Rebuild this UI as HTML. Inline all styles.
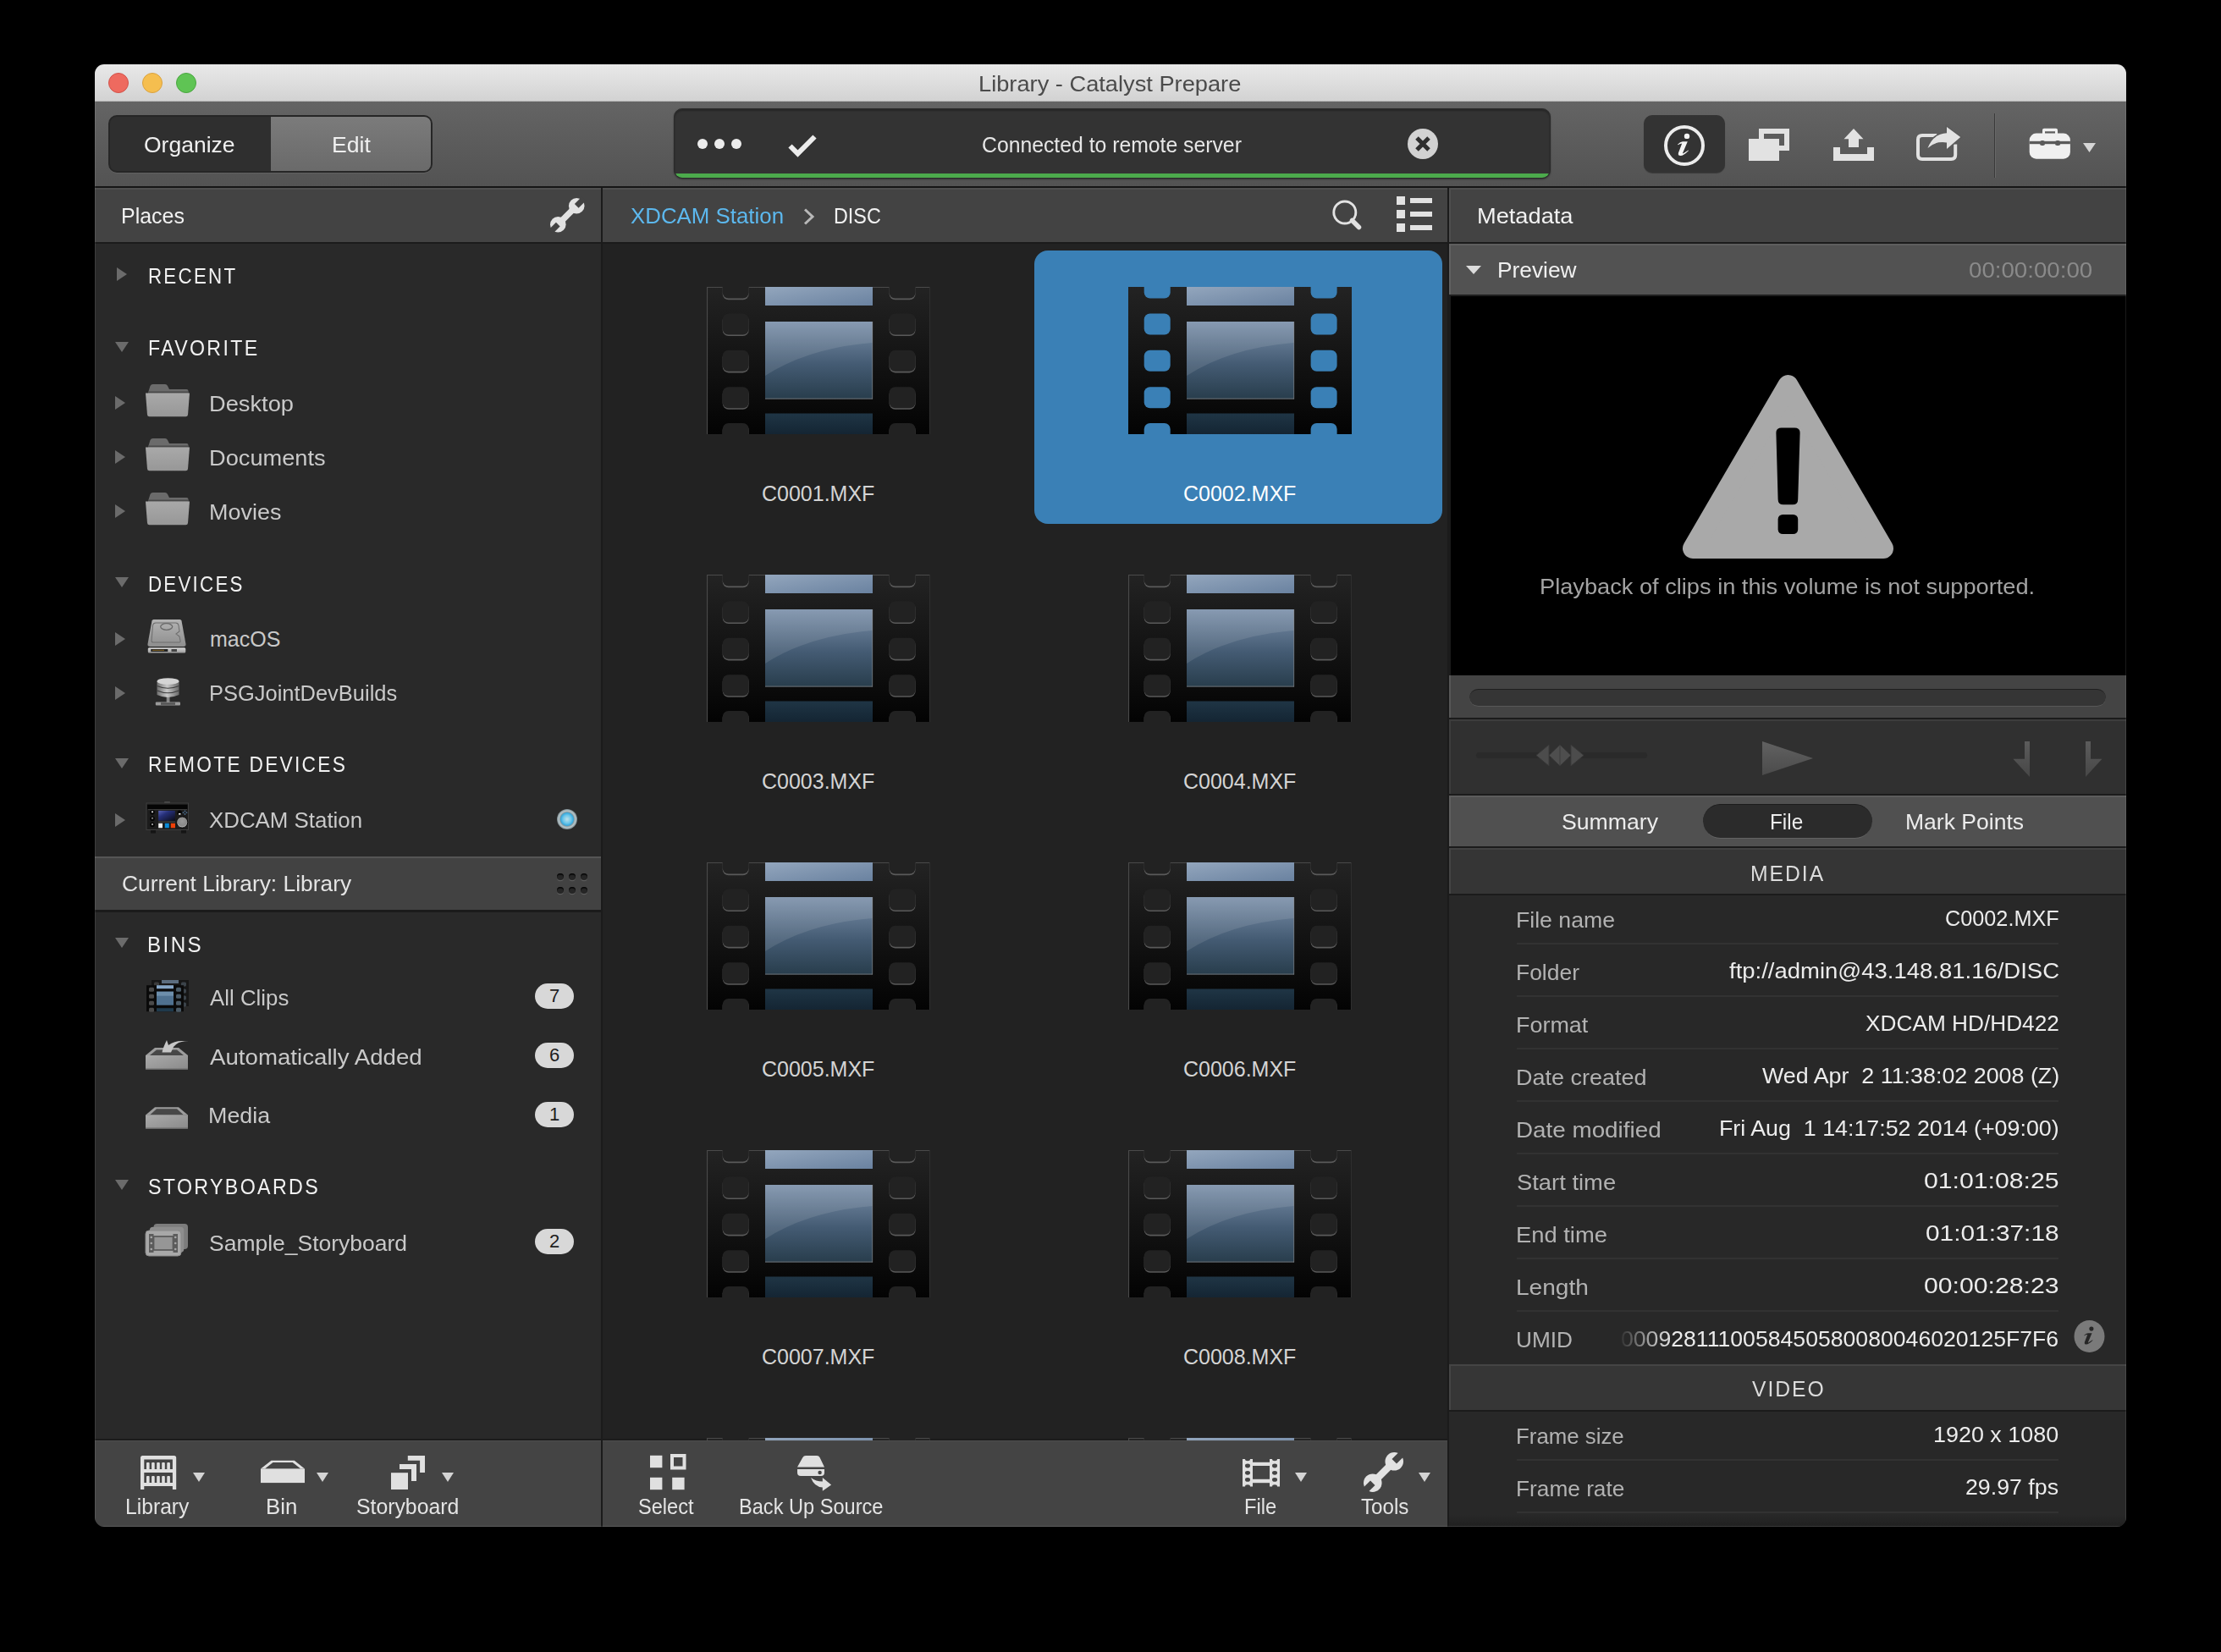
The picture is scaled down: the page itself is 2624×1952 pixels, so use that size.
<!DOCTYPE html>
<html><head><meta charset="utf-8"><style>
html,body{margin:0;padding:0;background:#000;width:2624px;height:1952px;overflow:hidden;}
.t{position:absolute;white-space:pre;line-height:normal;transform-origin:0 0;font-family:'Liberation Sans', sans-serif;}
svg{overflow:visible}
</style></head><body>
<div style="position:absolute;left:0;top:0;width:2624px;height:1952px;background:#000"></div>
<div style="position:absolute;left:0;top:0;width:2624px;height:1952px;clip-path:inset(76px 112px 148px 112px round 11px);">
<div style="position:absolute;left:112px;top:76px;width:2400px;height:44px;background:linear-gradient(#e9e9e9,#d2d2d2);"></div>
<div style="position:absolute;left:112px;top:119px;width:2400px;height:1px;background:#b9b9b9;"></div>
<div style="position:absolute;left:128px;top:86px;width:22px;height:22px;border-radius:50%;background:#ee6a5f;border:1px solid #d1524a"></div>
<div style="position:absolute;left:168px;top:86px;width:22px;height:22px;border-radius:50%;background:#f5be4f;border:1px solid #d9a13f"></div>
<div style="position:absolute;left:208px;top:86px;width:22px;height:22px;border-radius:50%;background:#5fc454;border:1px solid #4aa640"></div>
<div style="position:absolute;left:112px;top:120px;width:2400px;height:100px;background:linear-gradient(#646464,#535353);"></div>
<div style="position:absolute;left:112px;top:220px;width:2400px;height:2px;background:#161616;"></div>
<div style="position:absolute;left:112px;top:222px;width:598px;height:64px;background:#434343;border-top:2px solid #4f4f4f;box-sizing:border-box"></div>
<div style="position:absolute;left:712px;top:222px;width:998px;height:64px;background:#434343;border-top:2px solid #4f4f4f;box-sizing:border-box"></div>
<div style="position:absolute;left:1712px;top:222px;width:800px;height:64px;background:#434343;border-top:2px solid #4f4f4f;box-sizing:border-box"></div>
<div style="position:absolute;left:112px;top:286px;width:2400px;height:2px;background:#1b1b1b;"></div>
<div style="position:absolute;left:710px;top:222px;width:2px;height:1582px;background:#1b1b1b;"></div>
<div style="position:absolute;left:1710px;top:222px;width:2px;height:1582px;background:#1b1b1b;"></div>
<div style="position:absolute;left:112px;top:288px;width:598px;height:724px;background:#292929;"></div>
<div style="position:absolute;left:112px;top:1012px;width:598px;height:63px;background:#424242;border-top:2px solid #555555;box-sizing:border-box"></div>
<div style="position:absolute;left:112px;top:1075px;width:598px;height:3px;background:#1b1b1b;"></div>
<div style="position:absolute;left:112px;top:1078px;width:598px;height:622px;background:#292929;"></div>
<div style="position:absolute;left:112px;top:1700px;width:598px;height:2px;background:#1b1b1b;"></div>
<div style="position:absolute;left:112px;top:1702px;width:598px;height:102px;background:#444444;border-top:1px solid #4d4d4d;box-sizing:border-box"></div>
<div style="position:absolute;left:712px;top:288px;width:998px;height:1412px;background:#222222;"></div>
<div style="position:absolute;left:712px;top:1700px;width:998px;height:2px;background:#1b1b1b;"></div>
<div style="position:absolute;left:712px;top:1702px;width:998px;height:102px;background:#444444;border-top:1px solid #4d4d4d;box-sizing:border-box"></div>
<div style="position:absolute;left:1712px;top:288px;width:800px;height:60px;background:#525252;border-top:2px solid #5e5e5e;box-sizing:border-box"></div>
<div style="position:absolute;left:1712px;top:348px;width:800px;height:2px;background:#1e1e1e;"></div>
<div style="position:absolute;left:1712px;top:350px;width:800px;height:448px;background:#000000;"></div>
<div style="position:absolute;left:1712px;top:798px;width:800px;height:50px;background:#444444;"></div>
<div style="position:absolute;left:1712px;top:848px;width:800px;height:2px;background:#1b1b1b;"></div>
<div style="position:absolute;left:1712px;top:850px;width:800px;height:88px;background:#303030;border-top:2px solid #3c3c3c;box-sizing:border-box"></div>
<div style="position:absolute;left:1712px;top:938px;width:800px;height:2px;background:#1b1b1b;"></div>
<div style="position:absolute;left:1712px;top:940px;width:800px;height:60px;background:#505050;border-top:2px solid #5c5c5c;box-sizing:border-box"></div>
<div style="position:absolute;left:1712px;top:1000px;width:800px;height:2px;background:#1b1b1b;"></div>
<div style="position:absolute;left:1712px;top:1002px;width:800px;height:54px;background:#353535;border-top:2px solid #424242;box-sizing:border-box"></div>
<div style="position:absolute;left:1712px;top:1056px;width:800px;height:2px;background:#1b1b1b;"></div>
<div style="position:absolute;left:1712px;top:1058px;width:800px;height:554px;background:#282828;"></div>
<div style="position:absolute;left:1712px;top:1612px;width:800px;height:54px;background:#363636;border-top:2px solid #454545;box-sizing:border-box"></div>
<div style="position:absolute;left:1712px;top:1666px;width:800px;height:2px;background:#1b1b1b;"></div>
<div style="position:absolute;left:1712px;top:1668px;width:800px;height:136px;background:#282828;"></div>
<div style="position:absolute;left:1712px;top:1790px;width:800px;height:14px;background:linear-gradient(#282828,#202020);"></div>
<div style="position:absolute;left:112px;top:1803px;width:2400px;height:1px;background:rgba(255,255,255,0.12);"></div>
<div style="position:absolute;left:1222px;top:296px;width:482px;height:323px;border-radius:16px;background:#3a80b6"></div>
<svg style="position:absolute;left:835px;top:339px;overflow:hidden" width="264" height="174" viewBox="0 0 264 174.000" preserveAspectRatio="xMinYMin slice"><defs><linearGradient id="fb1" x1="0" y1="0" x2="0" y2="1"><stop offset="0" stop-color="#232323"/><stop offset="1" stop-color="#030303"/></linearGradient><linearGradient id="ft1" x1="0" y1="0" x2="1" y2="1"><stop offset="0" stop-color="#93a6bd"/><stop offset="1" stop-color="#6a82a0"/></linearGradient><linearGradient id="fm1" x1="0" y1="0" x2="0" y2="1"><stop offset="0" stop-color="#7a8fa9"/><stop offset="0.55" stop-color="#445b73"/><stop offset="1" stop-color="#283d4c"/></linearGradient><linearGradient id="fo1" x1="0" y1="0" x2="0" y2="1"><stop offset="0" stop-color="#1f3545"/><stop offset="1" stop-color="#142533"/></linearGradient></defs><rect x="0" y="0" width="264" height="174" fill="url(#fb1)"/><path d="M0.5 174 V0.5 H18.7 M49.7 0.5 H69 M196 0.5 H215.6 M246.6 0.5 H263.5" stroke="#4a4a4a" stroke-width="1.2" fill="none"/><path d="M263.5 0.5 V174" stroke="#2e2e2e" stroke-width="1.2"/><rect x="18.7" y="-9.8" width="31" height="25" rx="7" fill="#5a5a5a"/><rect x="18.7" y="-11.4" width="31" height="25" rx="7" fill="#222222"/><rect x="215.6" y="-9.8" width="31" height="25" rx="7" fill="#5a5a5a"/><rect x="215.6" y="-11.4" width="31" height="25" rx="7" fill="#222222"/><rect x="18.7" y="33.1" width="31" height="25" rx="7" fill="#5a5a5a"/><rect x="18.7" y="31.5" width="31" height="25" rx="7" fill="#222222"/><rect x="215.6" y="33.1" width="31" height="25" rx="7" fill="#5a5a5a"/><rect x="215.6" y="31.5" width="31" height="25" rx="7" fill="#222222"/><rect x="18.7" y="76.39999999999999" width="31" height="25" rx="7" fill="#5a5a5a"/><rect x="18.7" y="74.8" width="31" height="25" rx="7" fill="#222222"/><rect x="215.6" y="76.39999999999999" width="31" height="25" rx="7" fill="#5a5a5a"/><rect x="215.6" y="74.8" width="31" height="25" rx="7" fill="#222222"/><rect x="18.7" y="119.8" width="31" height="25" rx="7" fill="#5a5a5a"/><rect x="18.7" y="118.2" width="31" height="25" rx="7" fill="#222222"/><rect x="215.6" y="119.8" width="31" height="25" rx="7" fill="#5a5a5a"/><rect x="215.6" y="118.2" width="31" height="25" rx="7" fill="#222222"/><rect x="18.7" y="162.5" width="31" height="25" rx="7" fill="#5a5a5a"/><rect x="18.7" y="160.9" width="31" height="25" rx="7" fill="#222222"/><rect x="215.6" y="162.5" width="31" height="25" rx="7" fill="#5a5a5a"/><rect x="215.6" y="160.9" width="31" height="25" rx="7" fill="#222222"/><rect x="69" y="0" width="127" height="22" fill="url(#ft1)"/><rect x="69" y="41" width="127" height="91.5" fill="url(#fm1)"/><path d="M69 105 Q120 72 196 66 V41 H69 Z" fill="#ffffff" opacity="0.10"/><rect x="69" y="131.5" width="127" height="1.2" fill="#8a8a8a" opacity="0.6"/><rect x="195" y="41" width="1.2" height="91.5" fill="#8a8a8a" opacity="0.5"/><rect x="69" y="149.5" width="127" height="24.5" fill="url(#fo1)"/></svg>
<svg style="position:absolute;left:1333px;top:339px;overflow:hidden" width="264" height="174" viewBox="0 0 264 174.000" preserveAspectRatio="xMinYMin slice"><defs><linearGradient id="fb2" x1="0" y1="0" x2="0" y2="1"><stop offset="0" stop-color="#232323"/><stop offset="1" stop-color="#030303"/></linearGradient><linearGradient id="ft2" x1="0" y1="0" x2="1" y2="1"><stop offset="0" stop-color="#93a6bd"/><stop offset="1" stop-color="#6a82a0"/></linearGradient><linearGradient id="fm2" x1="0" y1="0" x2="0" y2="1"><stop offset="0" stop-color="#7a8fa9"/><stop offset="0.55" stop-color="#445b73"/><stop offset="1" stop-color="#283d4c"/></linearGradient><linearGradient id="fo2" x1="0" y1="0" x2="0" y2="1"><stop offset="0" stop-color="#1f3545"/><stop offset="1" stop-color="#142533"/></linearGradient></defs><rect x="0" y="0" width="264" height="174" fill="url(#fb2)"/><rect x="18.7" y="-11.4" width="31" height="25" rx="7" fill="#3a80b6"/><rect x="215.6" y="-11.4" width="31" height="25" rx="7" fill="#3a80b6"/><rect x="18.7" y="31.5" width="31" height="25" rx="7" fill="#3a80b6"/><rect x="215.6" y="31.5" width="31" height="25" rx="7" fill="#3a80b6"/><rect x="18.7" y="74.8" width="31" height="25" rx="7" fill="#3a80b6"/><rect x="215.6" y="74.8" width="31" height="25" rx="7" fill="#3a80b6"/><rect x="18.7" y="118.2" width="31" height="25" rx="7" fill="#3a80b6"/><rect x="215.6" y="118.2" width="31" height="25" rx="7" fill="#3a80b6"/><rect x="18.7" y="160.9" width="31" height="25" rx="7" fill="#3a80b6"/><rect x="215.6" y="160.9" width="31" height="25" rx="7" fill="#3a80b6"/><rect x="69" y="0" width="127" height="22" fill="url(#ft2)"/><rect x="69" y="41" width="127" height="91.5" fill="url(#fm2)"/><path d="M69 105 Q120 72 196 66 V41 H69 Z" fill="#ffffff" opacity="0.10"/><rect x="69" y="131.5" width="127" height="1.2" fill="#8a8a8a" opacity="0.6"/><rect x="195" y="41" width="1.2" height="91.5" fill="#8a8a8a" opacity="0.5"/><rect x="69" y="149.5" width="127" height="24.5" fill="url(#fo2)"/></svg>
<svg style="position:absolute;left:835px;top:679px;overflow:hidden" width="264" height="174" viewBox="0 0 264 174.000" preserveAspectRatio="xMinYMin slice"><defs><linearGradient id="fb3" x1="0" y1="0" x2="0" y2="1"><stop offset="0" stop-color="#232323"/><stop offset="1" stop-color="#030303"/></linearGradient><linearGradient id="ft3" x1="0" y1="0" x2="1" y2="1"><stop offset="0" stop-color="#93a6bd"/><stop offset="1" stop-color="#6a82a0"/></linearGradient><linearGradient id="fm3" x1="0" y1="0" x2="0" y2="1"><stop offset="0" stop-color="#7a8fa9"/><stop offset="0.55" stop-color="#445b73"/><stop offset="1" stop-color="#283d4c"/></linearGradient><linearGradient id="fo3" x1="0" y1="0" x2="0" y2="1"><stop offset="0" stop-color="#1f3545"/><stop offset="1" stop-color="#142533"/></linearGradient></defs><rect x="0" y="0" width="264" height="174" fill="url(#fb3)"/><path d="M0.5 174 V0.5 H18.7 M49.7 0.5 H69 M196 0.5 H215.6 M246.6 0.5 H263.5" stroke="#4a4a4a" stroke-width="1.2" fill="none"/><path d="M263.5 0.5 V174" stroke="#2e2e2e" stroke-width="1.2"/><rect x="18.7" y="-9.8" width="31" height="25" rx="7" fill="#5a5a5a"/><rect x="18.7" y="-11.4" width="31" height="25" rx="7" fill="#222222"/><rect x="215.6" y="-9.8" width="31" height="25" rx="7" fill="#5a5a5a"/><rect x="215.6" y="-11.4" width="31" height="25" rx="7" fill="#222222"/><rect x="18.7" y="33.1" width="31" height="25" rx="7" fill="#5a5a5a"/><rect x="18.7" y="31.5" width="31" height="25" rx="7" fill="#222222"/><rect x="215.6" y="33.1" width="31" height="25" rx="7" fill="#5a5a5a"/><rect x="215.6" y="31.5" width="31" height="25" rx="7" fill="#222222"/><rect x="18.7" y="76.39999999999999" width="31" height="25" rx="7" fill="#5a5a5a"/><rect x="18.7" y="74.8" width="31" height="25" rx="7" fill="#222222"/><rect x="215.6" y="76.39999999999999" width="31" height="25" rx="7" fill="#5a5a5a"/><rect x="215.6" y="74.8" width="31" height="25" rx="7" fill="#222222"/><rect x="18.7" y="119.8" width="31" height="25" rx="7" fill="#5a5a5a"/><rect x="18.7" y="118.2" width="31" height="25" rx="7" fill="#222222"/><rect x="215.6" y="119.8" width="31" height="25" rx="7" fill="#5a5a5a"/><rect x="215.6" y="118.2" width="31" height="25" rx="7" fill="#222222"/><rect x="18.7" y="162.5" width="31" height="25" rx="7" fill="#5a5a5a"/><rect x="18.7" y="160.9" width="31" height="25" rx="7" fill="#222222"/><rect x="215.6" y="162.5" width="31" height="25" rx="7" fill="#5a5a5a"/><rect x="215.6" y="160.9" width="31" height="25" rx="7" fill="#222222"/><rect x="69" y="0" width="127" height="22" fill="url(#ft3)"/><rect x="69" y="41" width="127" height="91.5" fill="url(#fm3)"/><path d="M69 105 Q120 72 196 66 V41 H69 Z" fill="#ffffff" opacity="0.10"/><rect x="69" y="131.5" width="127" height="1.2" fill="#8a8a8a" opacity="0.6"/><rect x="195" y="41" width="1.2" height="91.5" fill="#8a8a8a" opacity="0.5"/><rect x="69" y="149.5" width="127" height="24.5" fill="url(#fo3)"/></svg>
<svg style="position:absolute;left:1333px;top:679px;overflow:hidden" width="264" height="174" viewBox="0 0 264 174.000" preserveAspectRatio="xMinYMin slice"><defs><linearGradient id="fb4" x1="0" y1="0" x2="0" y2="1"><stop offset="0" stop-color="#232323"/><stop offset="1" stop-color="#030303"/></linearGradient><linearGradient id="ft4" x1="0" y1="0" x2="1" y2="1"><stop offset="0" stop-color="#93a6bd"/><stop offset="1" stop-color="#6a82a0"/></linearGradient><linearGradient id="fm4" x1="0" y1="0" x2="0" y2="1"><stop offset="0" stop-color="#7a8fa9"/><stop offset="0.55" stop-color="#445b73"/><stop offset="1" stop-color="#283d4c"/></linearGradient><linearGradient id="fo4" x1="0" y1="0" x2="0" y2="1"><stop offset="0" stop-color="#1f3545"/><stop offset="1" stop-color="#142533"/></linearGradient></defs><rect x="0" y="0" width="264" height="174" fill="url(#fb4)"/><path d="M0.5 174 V0.5 H18.7 M49.7 0.5 H69 M196 0.5 H215.6 M246.6 0.5 H263.5" stroke="#4a4a4a" stroke-width="1.2" fill="none"/><path d="M263.5 0.5 V174" stroke="#2e2e2e" stroke-width="1.2"/><rect x="18.7" y="-9.8" width="31" height="25" rx="7" fill="#5a5a5a"/><rect x="18.7" y="-11.4" width="31" height="25" rx="7" fill="#222222"/><rect x="215.6" y="-9.8" width="31" height="25" rx="7" fill="#5a5a5a"/><rect x="215.6" y="-11.4" width="31" height="25" rx="7" fill="#222222"/><rect x="18.7" y="33.1" width="31" height="25" rx="7" fill="#5a5a5a"/><rect x="18.7" y="31.5" width="31" height="25" rx="7" fill="#222222"/><rect x="215.6" y="33.1" width="31" height="25" rx="7" fill="#5a5a5a"/><rect x="215.6" y="31.5" width="31" height="25" rx="7" fill="#222222"/><rect x="18.7" y="76.39999999999999" width="31" height="25" rx="7" fill="#5a5a5a"/><rect x="18.7" y="74.8" width="31" height="25" rx="7" fill="#222222"/><rect x="215.6" y="76.39999999999999" width="31" height="25" rx="7" fill="#5a5a5a"/><rect x="215.6" y="74.8" width="31" height="25" rx="7" fill="#222222"/><rect x="18.7" y="119.8" width="31" height="25" rx="7" fill="#5a5a5a"/><rect x="18.7" y="118.2" width="31" height="25" rx="7" fill="#222222"/><rect x="215.6" y="119.8" width="31" height="25" rx="7" fill="#5a5a5a"/><rect x="215.6" y="118.2" width="31" height="25" rx="7" fill="#222222"/><rect x="18.7" y="162.5" width="31" height="25" rx="7" fill="#5a5a5a"/><rect x="18.7" y="160.9" width="31" height="25" rx="7" fill="#222222"/><rect x="215.6" y="162.5" width="31" height="25" rx="7" fill="#5a5a5a"/><rect x="215.6" y="160.9" width="31" height="25" rx="7" fill="#222222"/><rect x="69" y="0" width="127" height="22" fill="url(#ft4)"/><rect x="69" y="41" width="127" height="91.5" fill="url(#fm4)"/><path d="M69 105 Q120 72 196 66 V41 H69 Z" fill="#ffffff" opacity="0.10"/><rect x="69" y="131.5" width="127" height="1.2" fill="#8a8a8a" opacity="0.6"/><rect x="195" y="41" width="1.2" height="91.5" fill="#8a8a8a" opacity="0.5"/><rect x="69" y="149.5" width="127" height="24.5" fill="url(#fo4)"/></svg>
<svg style="position:absolute;left:835px;top:1019px;overflow:hidden" width="264" height="174" viewBox="0 0 264 174.000" preserveAspectRatio="xMinYMin slice"><defs><linearGradient id="fb5" x1="0" y1="0" x2="0" y2="1"><stop offset="0" stop-color="#232323"/><stop offset="1" stop-color="#030303"/></linearGradient><linearGradient id="ft5" x1="0" y1="0" x2="1" y2="1"><stop offset="0" stop-color="#93a6bd"/><stop offset="1" stop-color="#6a82a0"/></linearGradient><linearGradient id="fm5" x1="0" y1="0" x2="0" y2="1"><stop offset="0" stop-color="#7a8fa9"/><stop offset="0.55" stop-color="#445b73"/><stop offset="1" stop-color="#283d4c"/></linearGradient><linearGradient id="fo5" x1="0" y1="0" x2="0" y2="1"><stop offset="0" stop-color="#1f3545"/><stop offset="1" stop-color="#142533"/></linearGradient></defs><rect x="0" y="0" width="264" height="174" fill="url(#fb5)"/><path d="M0.5 174 V0.5 H18.7 M49.7 0.5 H69 M196 0.5 H215.6 M246.6 0.5 H263.5" stroke="#4a4a4a" stroke-width="1.2" fill="none"/><path d="M263.5 0.5 V174" stroke="#2e2e2e" stroke-width="1.2"/><rect x="18.7" y="-9.8" width="31" height="25" rx="7" fill="#5a5a5a"/><rect x="18.7" y="-11.4" width="31" height="25" rx="7" fill="#222222"/><rect x="215.6" y="-9.8" width="31" height="25" rx="7" fill="#5a5a5a"/><rect x="215.6" y="-11.4" width="31" height="25" rx="7" fill="#222222"/><rect x="18.7" y="33.1" width="31" height="25" rx="7" fill="#5a5a5a"/><rect x="18.7" y="31.5" width="31" height="25" rx="7" fill="#222222"/><rect x="215.6" y="33.1" width="31" height="25" rx="7" fill="#5a5a5a"/><rect x="215.6" y="31.5" width="31" height="25" rx="7" fill="#222222"/><rect x="18.7" y="76.39999999999999" width="31" height="25" rx="7" fill="#5a5a5a"/><rect x="18.7" y="74.8" width="31" height="25" rx="7" fill="#222222"/><rect x="215.6" y="76.39999999999999" width="31" height="25" rx="7" fill="#5a5a5a"/><rect x="215.6" y="74.8" width="31" height="25" rx="7" fill="#222222"/><rect x="18.7" y="119.8" width="31" height="25" rx="7" fill="#5a5a5a"/><rect x="18.7" y="118.2" width="31" height="25" rx="7" fill="#222222"/><rect x="215.6" y="119.8" width="31" height="25" rx="7" fill="#5a5a5a"/><rect x="215.6" y="118.2" width="31" height="25" rx="7" fill="#222222"/><rect x="18.7" y="162.5" width="31" height="25" rx="7" fill="#5a5a5a"/><rect x="18.7" y="160.9" width="31" height="25" rx="7" fill="#222222"/><rect x="215.6" y="162.5" width="31" height="25" rx="7" fill="#5a5a5a"/><rect x="215.6" y="160.9" width="31" height="25" rx="7" fill="#222222"/><rect x="69" y="0" width="127" height="22" fill="url(#ft5)"/><rect x="69" y="41" width="127" height="91.5" fill="url(#fm5)"/><path d="M69 105 Q120 72 196 66 V41 H69 Z" fill="#ffffff" opacity="0.10"/><rect x="69" y="131.5" width="127" height="1.2" fill="#8a8a8a" opacity="0.6"/><rect x="195" y="41" width="1.2" height="91.5" fill="#8a8a8a" opacity="0.5"/><rect x="69" y="149.5" width="127" height="24.5" fill="url(#fo5)"/></svg>
<svg style="position:absolute;left:1333px;top:1019px;overflow:hidden" width="264" height="174" viewBox="0 0 264 174.000" preserveAspectRatio="xMinYMin slice"><defs><linearGradient id="fb6" x1="0" y1="0" x2="0" y2="1"><stop offset="0" stop-color="#232323"/><stop offset="1" stop-color="#030303"/></linearGradient><linearGradient id="ft6" x1="0" y1="0" x2="1" y2="1"><stop offset="0" stop-color="#93a6bd"/><stop offset="1" stop-color="#6a82a0"/></linearGradient><linearGradient id="fm6" x1="0" y1="0" x2="0" y2="1"><stop offset="0" stop-color="#7a8fa9"/><stop offset="0.55" stop-color="#445b73"/><stop offset="1" stop-color="#283d4c"/></linearGradient><linearGradient id="fo6" x1="0" y1="0" x2="0" y2="1"><stop offset="0" stop-color="#1f3545"/><stop offset="1" stop-color="#142533"/></linearGradient></defs><rect x="0" y="0" width="264" height="174" fill="url(#fb6)"/><path d="M0.5 174 V0.5 H18.7 M49.7 0.5 H69 M196 0.5 H215.6 M246.6 0.5 H263.5" stroke="#4a4a4a" stroke-width="1.2" fill="none"/><path d="M263.5 0.5 V174" stroke="#2e2e2e" stroke-width="1.2"/><rect x="18.7" y="-9.8" width="31" height="25" rx="7" fill="#5a5a5a"/><rect x="18.7" y="-11.4" width="31" height="25" rx="7" fill="#222222"/><rect x="215.6" y="-9.8" width="31" height="25" rx="7" fill="#5a5a5a"/><rect x="215.6" y="-11.4" width="31" height="25" rx="7" fill="#222222"/><rect x="18.7" y="33.1" width="31" height="25" rx="7" fill="#5a5a5a"/><rect x="18.7" y="31.5" width="31" height="25" rx="7" fill="#222222"/><rect x="215.6" y="33.1" width="31" height="25" rx="7" fill="#5a5a5a"/><rect x="215.6" y="31.5" width="31" height="25" rx="7" fill="#222222"/><rect x="18.7" y="76.39999999999999" width="31" height="25" rx="7" fill="#5a5a5a"/><rect x="18.7" y="74.8" width="31" height="25" rx="7" fill="#222222"/><rect x="215.6" y="76.39999999999999" width="31" height="25" rx="7" fill="#5a5a5a"/><rect x="215.6" y="74.8" width="31" height="25" rx="7" fill="#222222"/><rect x="18.7" y="119.8" width="31" height="25" rx="7" fill="#5a5a5a"/><rect x="18.7" y="118.2" width="31" height="25" rx="7" fill="#222222"/><rect x="215.6" y="119.8" width="31" height="25" rx="7" fill="#5a5a5a"/><rect x="215.6" y="118.2" width="31" height="25" rx="7" fill="#222222"/><rect x="18.7" y="162.5" width="31" height="25" rx="7" fill="#5a5a5a"/><rect x="18.7" y="160.9" width="31" height="25" rx="7" fill="#222222"/><rect x="215.6" y="162.5" width="31" height="25" rx="7" fill="#5a5a5a"/><rect x="215.6" y="160.9" width="31" height="25" rx="7" fill="#222222"/><rect x="69" y="0" width="127" height="22" fill="url(#ft6)"/><rect x="69" y="41" width="127" height="91.5" fill="url(#fm6)"/><path d="M69 105 Q120 72 196 66 V41 H69 Z" fill="#ffffff" opacity="0.10"/><rect x="69" y="131.5" width="127" height="1.2" fill="#8a8a8a" opacity="0.6"/><rect x="195" y="41" width="1.2" height="91.5" fill="#8a8a8a" opacity="0.5"/><rect x="69" y="149.5" width="127" height="24.5" fill="url(#fo6)"/></svg>
<svg style="position:absolute;left:835px;top:1359px;overflow:hidden" width="264" height="174" viewBox="0 0 264 174.000" preserveAspectRatio="xMinYMin slice"><defs><linearGradient id="fb7" x1="0" y1="0" x2="0" y2="1"><stop offset="0" stop-color="#232323"/><stop offset="1" stop-color="#030303"/></linearGradient><linearGradient id="ft7" x1="0" y1="0" x2="1" y2="1"><stop offset="0" stop-color="#93a6bd"/><stop offset="1" stop-color="#6a82a0"/></linearGradient><linearGradient id="fm7" x1="0" y1="0" x2="0" y2="1"><stop offset="0" stop-color="#7a8fa9"/><stop offset="0.55" stop-color="#445b73"/><stop offset="1" stop-color="#283d4c"/></linearGradient><linearGradient id="fo7" x1="0" y1="0" x2="0" y2="1"><stop offset="0" stop-color="#1f3545"/><stop offset="1" stop-color="#142533"/></linearGradient></defs><rect x="0" y="0" width="264" height="174" fill="url(#fb7)"/><path d="M0.5 174 V0.5 H18.7 M49.7 0.5 H69 M196 0.5 H215.6 M246.6 0.5 H263.5" stroke="#4a4a4a" stroke-width="1.2" fill="none"/><path d="M263.5 0.5 V174" stroke="#2e2e2e" stroke-width="1.2"/><rect x="18.7" y="-9.8" width="31" height="25" rx="7" fill="#5a5a5a"/><rect x="18.7" y="-11.4" width="31" height="25" rx="7" fill="#222222"/><rect x="215.6" y="-9.8" width="31" height="25" rx="7" fill="#5a5a5a"/><rect x="215.6" y="-11.4" width="31" height="25" rx="7" fill="#222222"/><rect x="18.7" y="33.1" width="31" height="25" rx="7" fill="#5a5a5a"/><rect x="18.7" y="31.5" width="31" height="25" rx="7" fill="#222222"/><rect x="215.6" y="33.1" width="31" height="25" rx="7" fill="#5a5a5a"/><rect x="215.6" y="31.5" width="31" height="25" rx="7" fill="#222222"/><rect x="18.7" y="76.39999999999999" width="31" height="25" rx="7" fill="#5a5a5a"/><rect x="18.7" y="74.8" width="31" height="25" rx="7" fill="#222222"/><rect x="215.6" y="76.39999999999999" width="31" height="25" rx="7" fill="#5a5a5a"/><rect x="215.6" y="74.8" width="31" height="25" rx="7" fill="#222222"/><rect x="18.7" y="119.8" width="31" height="25" rx="7" fill="#5a5a5a"/><rect x="18.7" y="118.2" width="31" height="25" rx="7" fill="#222222"/><rect x="215.6" y="119.8" width="31" height="25" rx="7" fill="#5a5a5a"/><rect x="215.6" y="118.2" width="31" height="25" rx="7" fill="#222222"/><rect x="18.7" y="162.5" width="31" height="25" rx="7" fill="#5a5a5a"/><rect x="18.7" y="160.9" width="31" height="25" rx="7" fill="#222222"/><rect x="215.6" y="162.5" width="31" height="25" rx="7" fill="#5a5a5a"/><rect x="215.6" y="160.9" width="31" height="25" rx="7" fill="#222222"/><rect x="69" y="0" width="127" height="22" fill="url(#ft7)"/><rect x="69" y="41" width="127" height="91.5" fill="url(#fm7)"/><path d="M69 105 Q120 72 196 66 V41 H69 Z" fill="#ffffff" opacity="0.10"/><rect x="69" y="131.5" width="127" height="1.2" fill="#8a8a8a" opacity="0.6"/><rect x="195" y="41" width="1.2" height="91.5" fill="#8a8a8a" opacity="0.5"/><rect x="69" y="149.5" width="127" height="24.5" fill="url(#fo7)"/></svg>
<svg style="position:absolute;left:1333px;top:1359px;overflow:hidden" width="264" height="174" viewBox="0 0 264 174.000" preserveAspectRatio="xMinYMin slice"><defs><linearGradient id="fb8" x1="0" y1="0" x2="0" y2="1"><stop offset="0" stop-color="#232323"/><stop offset="1" stop-color="#030303"/></linearGradient><linearGradient id="ft8" x1="0" y1="0" x2="1" y2="1"><stop offset="0" stop-color="#93a6bd"/><stop offset="1" stop-color="#6a82a0"/></linearGradient><linearGradient id="fm8" x1="0" y1="0" x2="0" y2="1"><stop offset="0" stop-color="#7a8fa9"/><stop offset="0.55" stop-color="#445b73"/><stop offset="1" stop-color="#283d4c"/></linearGradient><linearGradient id="fo8" x1="0" y1="0" x2="0" y2="1"><stop offset="0" stop-color="#1f3545"/><stop offset="1" stop-color="#142533"/></linearGradient></defs><rect x="0" y="0" width="264" height="174" fill="url(#fb8)"/><path d="M0.5 174 V0.5 H18.7 M49.7 0.5 H69 M196 0.5 H215.6 M246.6 0.5 H263.5" stroke="#4a4a4a" stroke-width="1.2" fill="none"/><path d="M263.5 0.5 V174" stroke="#2e2e2e" stroke-width="1.2"/><rect x="18.7" y="-9.8" width="31" height="25" rx="7" fill="#5a5a5a"/><rect x="18.7" y="-11.4" width="31" height="25" rx="7" fill="#222222"/><rect x="215.6" y="-9.8" width="31" height="25" rx="7" fill="#5a5a5a"/><rect x="215.6" y="-11.4" width="31" height="25" rx="7" fill="#222222"/><rect x="18.7" y="33.1" width="31" height="25" rx="7" fill="#5a5a5a"/><rect x="18.7" y="31.5" width="31" height="25" rx="7" fill="#222222"/><rect x="215.6" y="33.1" width="31" height="25" rx="7" fill="#5a5a5a"/><rect x="215.6" y="31.5" width="31" height="25" rx="7" fill="#222222"/><rect x="18.7" y="76.39999999999999" width="31" height="25" rx="7" fill="#5a5a5a"/><rect x="18.7" y="74.8" width="31" height="25" rx="7" fill="#222222"/><rect x="215.6" y="76.39999999999999" width="31" height="25" rx="7" fill="#5a5a5a"/><rect x="215.6" y="74.8" width="31" height="25" rx="7" fill="#222222"/><rect x="18.7" y="119.8" width="31" height="25" rx="7" fill="#5a5a5a"/><rect x="18.7" y="118.2" width="31" height="25" rx="7" fill="#222222"/><rect x="215.6" y="119.8" width="31" height="25" rx="7" fill="#5a5a5a"/><rect x="215.6" y="118.2" width="31" height="25" rx="7" fill="#222222"/><rect x="18.7" y="162.5" width="31" height="25" rx="7" fill="#5a5a5a"/><rect x="18.7" y="160.9" width="31" height="25" rx="7" fill="#222222"/><rect x="215.6" y="162.5" width="31" height="25" rx="7" fill="#5a5a5a"/><rect x="215.6" y="160.9" width="31" height="25" rx="7" fill="#222222"/><rect x="69" y="0" width="127" height="22" fill="url(#ft8)"/><rect x="69" y="41" width="127" height="91.5" fill="url(#fm8)"/><path d="M69 105 Q120 72 196 66 V41 H69 Z" fill="#ffffff" opacity="0.10"/><rect x="69" y="131.5" width="127" height="1.2" fill="#8a8a8a" opacity="0.6"/><rect x="195" y="41" width="1.2" height="91.5" fill="#8a8a8a" opacity="0.5"/><rect x="69" y="149.5" width="127" height="24.5" fill="url(#fo8)"/></svg>
<svg style="position:absolute;left:835px;top:1699px;overflow:hidden" width="264" height="3" viewBox="0 0 264 3.000" preserveAspectRatio="xMinYMin slice"><defs><linearGradient id="fb9" x1="0" y1="0" x2="0" y2="1"><stop offset="0" stop-color="#232323"/><stop offset="1" stop-color="#030303"/></linearGradient><linearGradient id="ft9" x1="0" y1="0" x2="1" y2="1"><stop offset="0" stop-color="#93a6bd"/><stop offset="1" stop-color="#6a82a0"/></linearGradient><linearGradient id="fm9" x1="0" y1="0" x2="0" y2="1"><stop offset="0" stop-color="#7a8fa9"/><stop offset="0.55" stop-color="#445b73"/><stop offset="1" stop-color="#283d4c"/></linearGradient><linearGradient id="fo9" x1="0" y1="0" x2="0" y2="1"><stop offset="0" stop-color="#1f3545"/><stop offset="1" stop-color="#142533"/></linearGradient></defs><rect x="0" y="0" width="264" height="174" fill="url(#fb9)"/><path d="M0.5 174 V0.5 H18.7 M49.7 0.5 H69 M196 0.5 H215.6 M246.6 0.5 H263.5" stroke="#4a4a4a" stroke-width="1.2" fill="none"/><path d="M263.5 0.5 V174" stroke="#2e2e2e" stroke-width="1.2"/><rect x="18.7" y="-9.8" width="31" height="25" rx="7" fill="#5a5a5a"/><rect x="18.7" y="-11.4" width="31" height="25" rx="7" fill="#222222"/><rect x="215.6" y="-9.8" width="31" height="25" rx="7" fill="#5a5a5a"/><rect x="215.6" y="-11.4" width="31" height="25" rx="7" fill="#222222"/><rect x="18.7" y="33.1" width="31" height="25" rx="7" fill="#5a5a5a"/><rect x="18.7" y="31.5" width="31" height="25" rx="7" fill="#222222"/><rect x="215.6" y="33.1" width="31" height="25" rx="7" fill="#5a5a5a"/><rect x="215.6" y="31.5" width="31" height="25" rx="7" fill="#222222"/><rect x="18.7" y="76.39999999999999" width="31" height="25" rx="7" fill="#5a5a5a"/><rect x="18.7" y="74.8" width="31" height="25" rx="7" fill="#222222"/><rect x="215.6" y="76.39999999999999" width="31" height="25" rx="7" fill="#5a5a5a"/><rect x="215.6" y="74.8" width="31" height="25" rx="7" fill="#222222"/><rect x="18.7" y="119.8" width="31" height="25" rx="7" fill="#5a5a5a"/><rect x="18.7" y="118.2" width="31" height="25" rx="7" fill="#222222"/><rect x="215.6" y="119.8" width="31" height="25" rx="7" fill="#5a5a5a"/><rect x="215.6" y="118.2" width="31" height="25" rx="7" fill="#222222"/><rect x="18.7" y="162.5" width="31" height="25" rx="7" fill="#5a5a5a"/><rect x="18.7" y="160.9" width="31" height="25" rx="7" fill="#222222"/><rect x="215.6" y="162.5" width="31" height="25" rx="7" fill="#5a5a5a"/><rect x="215.6" y="160.9" width="31" height="25" rx="7" fill="#222222"/><rect x="69" y="0" width="127" height="22" fill="url(#ft9)"/><rect x="69" y="41" width="127" height="91.5" fill="url(#fm9)"/><path d="M69 105 Q120 72 196 66 V41 H69 Z" fill="#ffffff" opacity="0.10"/><rect x="69" y="131.5" width="127" height="1.2" fill="#8a8a8a" opacity="0.6"/><rect x="195" y="41" width="1.2" height="91.5" fill="#8a8a8a" opacity="0.5"/><rect x="69" y="149.5" width="127" height="24.5" fill="url(#fo9)"/></svg>
<svg style="position:absolute;left:1333px;top:1699px;overflow:hidden" width="264" height="3" viewBox="0 0 264 3.000" preserveAspectRatio="xMinYMin slice"><defs><linearGradient id="fb10" x1="0" y1="0" x2="0" y2="1"><stop offset="0" stop-color="#232323"/><stop offset="1" stop-color="#030303"/></linearGradient><linearGradient id="ft10" x1="0" y1="0" x2="1" y2="1"><stop offset="0" stop-color="#93a6bd"/><stop offset="1" stop-color="#6a82a0"/></linearGradient><linearGradient id="fm10" x1="0" y1="0" x2="0" y2="1"><stop offset="0" stop-color="#7a8fa9"/><stop offset="0.55" stop-color="#445b73"/><stop offset="1" stop-color="#283d4c"/></linearGradient><linearGradient id="fo10" x1="0" y1="0" x2="0" y2="1"><stop offset="0" stop-color="#1f3545"/><stop offset="1" stop-color="#142533"/></linearGradient></defs><rect x="0" y="0" width="264" height="174" fill="url(#fb10)"/><path d="M0.5 174 V0.5 H18.7 M49.7 0.5 H69 M196 0.5 H215.6 M246.6 0.5 H263.5" stroke="#4a4a4a" stroke-width="1.2" fill="none"/><path d="M263.5 0.5 V174" stroke="#2e2e2e" stroke-width="1.2"/><rect x="18.7" y="-9.8" width="31" height="25" rx="7" fill="#5a5a5a"/><rect x="18.7" y="-11.4" width="31" height="25" rx="7" fill="#222222"/><rect x="215.6" y="-9.8" width="31" height="25" rx="7" fill="#5a5a5a"/><rect x="215.6" y="-11.4" width="31" height="25" rx="7" fill="#222222"/><rect x="18.7" y="33.1" width="31" height="25" rx="7" fill="#5a5a5a"/><rect x="18.7" y="31.5" width="31" height="25" rx="7" fill="#222222"/><rect x="215.6" y="33.1" width="31" height="25" rx="7" fill="#5a5a5a"/><rect x="215.6" y="31.5" width="31" height="25" rx="7" fill="#222222"/><rect x="18.7" y="76.39999999999999" width="31" height="25" rx="7" fill="#5a5a5a"/><rect x="18.7" y="74.8" width="31" height="25" rx="7" fill="#222222"/><rect x="215.6" y="76.39999999999999" width="31" height="25" rx="7" fill="#5a5a5a"/><rect x="215.6" y="74.8" width="31" height="25" rx="7" fill="#222222"/><rect x="18.7" y="119.8" width="31" height="25" rx="7" fill="#5a5a5a"/><rect x="18.7" y="118.2" width="31" height="25" rx="7" fill="#222222"/><rect x="215.6" y="119.8" width="31" height="25" rx="7" fill="#5a5a5a"/><rect x="215.6" y="118.2" width="31" height="25" rx="7" fill="#222222"/><rect x="18.7" y="162.5" width="31" height="25" rx="7" fill="#5a5a5a"/><rect x="18.7" y="160.9" width="31" height="25" rx="7" fill="#222222"/><rect x="215.6" y="162.5" width="31" height="25" rx="7" fill="#5a5a5a"/><rect x="215.6" y="160.9" width="31" height="25" rx="7" fill="#222222"/><rect x="69" y="0" width="127" height="22" fill="url(#ft10)"/><rect x="69" y="41" width="127" height="91.5" fill="url(#fm10)"/><path d="M69 105 Q120 72 196 66 V41 H69 Z" fill="#ffffff" opacity="0.10"/><rect x="69" y="131.5" width="127" height="1.2" fill="#8a8a8a" opacity="0.6"/><rect x="195" y="41" width="1.2" height="91.5" fill="#8a8a8a" opacity="0.5"/><rect x="69" y="149.5" width="127" height="24.5" fill="url(#fo10)"/></svg>
<svg style="position:absolute;left:1988px;top:442px;" width="249" height="219" viewBox="0 0 249 219"><path d="M124.5 13 L12 206 H237 Z" fill="#a9a9a9" stroke="#a9a9a9" stroke-width="24" stroke-linejoin="round"/><path d="M116.5 63.5 H132.5 Q138.6 63.5 138.6 69.5 L136.2 148 Q136.2 154.3 130 154.3 H119 Q112.6 154.3 112.6 148 L110.4 69.5 Q110.4 63.5 116.5 63.5 Z" fill="#000"/><rect x="112.6" y="166" width="23.6" height="23" rx="5.5" fill="#000"/></svg>
<svg style="position:absolute;left:138px;top:316px;" width="12" height="16" viewBox="0 0 12 16"><path d="M0 0 L12 8 L0 16 Z" fill="#6b6b6b"/></svg>
<svg style="position:absolute;left:136px;top:404px;" width="16" height="12" viewBox="0 0 16 12"><path d="M0 0 H16 L8 12 Z" fill="#6b6b6b"/></svg>
<svg style="position:absolute;left:136px;top:468px;" width="12" height="16" viewBox="0 0 12 16"><path d="M0 0 L12 8 L0 16 Z" fill="#6b6b6b"/></svg>
<svg style="position:absolute;left:136px;top:532px;" width="12" height="16" viewBox="0 0 12 16"><path d="M0 0 L12 8 L0 16 Z" fill="#6b6b6b"/></svg>
<svg style="position:absolute;left:136px;top:596px;" width="12" height="16" viewBox="0 0 12 16"><path d="M0 0 L12 8 L0 16 Z" fill="#6b6b6b"/></svg>
<svg style="position:absolute;left:136px;top:682px;" width="16" height="12" viewBox="0 0 16 12"><path d="M0 0 H16 L8 12 Z" fill="#6b6b6b"/></svg>
<svg style="position:absolute;left:136px;top:747px;" width="12" height="16" viewBox="0 0 12 16"><path d="M0 0 L12 8 L0 16 Z" fill="#6b6b6b"/></svg>
<svg style="position:absolute;left:136px;top:811px;" width="12" height="16" viewBox="0 0 12 16"><path d="M0 0 L12 8 L0 16 Z" fill="#6b6b6b"/></svg>
<svg style="position:absolute;left:136px;top:896px;" width="16" height="12" viewBox="0 0 16 12"><path d="M0 0 H16 L8 12 Z" fill="#6b6b6b"/></svg>
<svg style="position:absolute;left:136px;top:961px;" width="12" height="16" viewBox="0 0 12 16"><path d="M0 0 L12 8 L0 16 Z" fill="#6b6b6b"/></svg>
<svg style="position:absolute;left:136px;top:1108px;" width="16" height="12" viewBox="0 0 16 12"><path d="M0 0 H16 L8 12 Z" fill="#6b6b6b"/></svg>
<svg style="position:absolute;left:136px;top:1394px;" width="16" height="12" viewBox="0 0 16 12"><path d="M0 0 H16 L8 12 Z" fill="#6b6b6b"/></svg>
<svg style="position:absolute;left:172px;top:454px;" width="52" height="39" viewBox="0 0 52 39"><defs><linearGradient id="fg" x1="0" y1="0" x2="0" y2="1"><stop offset="0" stop-color="#a9a9a9"/><stop offset="1" stop-color="#979797"/></linearGradient></defs><path d="M3 10 L5.5 2 Q6.5 0 8.5 0 H23 Q25 0 26 2 L28 6 H48.5 Q50.5 6 50.5 8 V12 H3 Z" fill="#6b6b6b"/><rect x="3" y="8.5" width="47" height="2" fill="#4a4a4a"/><path d="M0 10.5 H52 L50 36 Q49.8 38.3 47.5 38.3 H4.5 Q2.2 38.3 2 36 Z" fill="url(#fg)"/></svg>
<svg style="position:absolute;left:172px;top:518px;" width="52" height="39" viewBox="0 0 52 39"><defs><linearGradient id="fg" x1="0" y1="0" x2="0" y2="1"><stop offset="0" stop-color="#a9a9a9"/><stop offset="1" stop-color="#979797"/></linearGradient></defs><path d="M3 10 L5.5 2 Q6.5 0 8.5 0 H23 Q25 0 26 2 L28 6 H48.5 Q50.5 6 50.5 8 V12 H3 Z" fill="#6b6b6b"/><rect x="3" y="8.5" width="47" height="2" fill="#4a4a4a"/><path d="M0 10.5 H52 L50 36 Q49.8 38.3 47.5 38.3 H4.5 Q2.2 38.3 2 36 Z" fill="url(#fg)"/></svg>
<svg style="position:absolute;left:172px;top:582px;" width="52" height="39" viewBox="0 0 52 39"><defs><linearGradient id="fg" x1="0" y1="0" x2="0" y2="1"><stop offset="0" stop-color="#a9a9a9"/><stop offset="1" stop-color="#979797"/></linearGradient></defs><path d="M3 10 L5.5 2 Q6.5 0 8.5 0 H23 Q25 0 26 2 L28 6 H48.5 Q50.5 6 50.5 8 V12 H3 Z" fill="#6b6b6b"/><rect x="3" y="8.5" width="47" height="2" fill="#4a4a4a"/><path d="M0 10.5 H52 L50 36 Q49.8 38.3 47.5 38.3 H4.5 Q2.2 38.3 2 36 Z" fill="url(#fg)"/></svg>
<svg style="position:absolute;left:174px;top:731px;" width="46" height="42" viewBox="0 0 46 42"><defs><linearGradient id="hd" x1="0" y1="0" x2="0" y2="1"><stop offset="0" stop-color="#b4b4b4"/><stop offset="1" stop-color="#8e8e8e"/></linearGradient><linearGradient id="hd2" x1="0" y1="0" x2="0" y2="1"><stop offset="0" stop-color="#d8d8d8"/><stop offset="1" stop-color="#9a9a9a"/></linearGradient></defs><path d="M7.5 1 H38.5 Q40 1 40.5 2.5 L45.5 30 Q45.8 33 43 33 H3 Q0.2 33 0.5 30 L5.5 2.5 Q6 1 7.5 1 Z" fill="url(#hd)"/><path d="M10 5 Q7 5 6.5 8 L5 26 Q5 28 7 28 H38 Q39.5 28 39 26 L38 21 L34 18 L38 15 L37 8 Q36.5 5 33.5 5 Z" fill="none" stroke="#6f6f6f" stroke-width="1.1"/><ellipse cx="22.7" cy="9.5" rx="7" ry="3.8" fill="none" stroke="#6a6a6a" stroke-width="1.3"/><rect x="0.8" y="33" width="44.5" height="1.2" fill="#222"/><rect x="0.8" y="34.2" width="44.5" height="6.3" rx="1.5" fill="url(#hd2)"/><rect x="4.3" y="36" width="20" height="3" fill="#222"/><rect x="6" y="36.8" width="14" height="1" fill="#8a6a2a"/><rect x="28.5" y="36" width="6.5" height="3" fill="#444"/></svg>
<svg style="position:absolute;left:183px;top:801px;" width="31" height="34" viewBox="0 0 31 34"><defs><linearGradient id="sv" x1="0" y1="0" x2="1" y2="0"><stop offset="0" stop-color="#6f6f6f"/><stop offset="0.45" stop-color="#c9c9c9"/><stop offset="1" stop-color="#6a6a6a"/></linearGradient></defs><rect x="13.7" y="22" width="3.8" height="8" fill="#8a8a8a"/><rect x="0.8" y="28.4" width="29.2" height="4.2" rx="1" fill="#9a9a9a"/><rect x="7" y="29.2" width="17" height="2.6" fill="#555"/><path d="M2.5 4 Q15.2 -2 28.5 4 V20 Q15.2 26 2.5 20 Z" fill="url(#sv)"/><path d="M2.5 9.5 Q15.2 15 28.5 9.5 M2.5 15 Q15.2 20.5 28.5 15" stroke="#3e3e3e" stroke-width="1.2" fill="none"/><ellipse cx="15.5" cy="4" rx="13" ry="3.8" fill="#d4d4d4"/></svg>
<svg style="position:absolute;left:173px;top:947px;" width="50" height="38" viewBox="0 0 50 38"><defs><linearGradient id="xs" x1="0" y1="0" x2="1" y2="1"><stop offset="0" stop-color="#5a63b5"/><stop offset="0.35" stop-color="#26307a"/><stop offset="1" stop-color="#0c0c16"/></linearGradient><radialGradient id="xk" cx="0.5" cy="0.4" r="0.6"><stop offset="0" stop-color="#9a9a9a"/><stop offset="0.7" stop-color="#8a8a8a"/><stop offset="1" stop-color="#cfcfcf"/></radialGradient></defs><rect x="21" y="0" width="7" height="2.5" rx="1" fill="#4a4a4a"/><rect x="0" y="2" width="49.5" height="31.5" fill="#1c1c1c" stroke="#3e3e3e" stroke-width="1"/><rect x="1" y="4" width="47.5" height="5" fill="#050505"/><rect x="2" y="9" width="46" height="1.2" fill="#3a3a3a"/><rect x="5" y="34" width="6" height="3.5" fill="#141414"/><rect x="41" y="34" width="6" height="3.5" fill="#141414"/><circle cx="7" cy="12.7" r="2.8" fill="#050505"/><circle cx="7" cy="12.3" r="1.1" fill="#ddd"/><circle cx="7" cy="20.2" r="2.8" fill="#050505"/><circle cx="7" cy="19.8" r="1.1" fill="#888"/><circle cx="7" cy="27.5" r="2.8" fill="#050505"/><circle cx="7" cy="27.1" r="1.1" fill="#aaa"/><rect x="14.2" y="10.9" width="19.7" height="11.9" fill="url(#xs)"/><rect x="14.2" y="23.5" width="19.7" height="1.2" fill="#444"/><rect x="14.2" y="25.8" width="4.8" height="5.5" fill="#f0f0f0"/><rect x="21.8" y="25.8" width="5" height="5.5" fill="#0a8ad8"/><rect x="28.8" y="25.8" width="5.2" height="5.5" fill="#f04008"/><circle cx="42.2" cy="24.5" r="6.6" fill="url(#xk)" stroke="#050505" stroke-width="1"/><circle cx="39.2" cy="13.2" r="2.7" fill="#050505"/><rect x="38" y="14" width="2.5" height="1.6" fill="#eee"/><circle cx="45.5" cy="11.5" r="0.9" fill="#4a6a8a"/><circle cx="45.5" cy="15" r="0.9" fill="#4a6a8a"/><circle cx="43.5" cy="13.2" r="0.9" fill="#4a6a8a"/><circle cx="47.5" cy="13.2" r="0.9" fill="#4a6a8a"/></svg>
<div style="position:absolute;left:658px;top:956px;width:24px;height:24px;border-radius:50%;background:radial-gradient(circle closest-side,#bfe0e8 0%,#6cc6ea 40%,#36a8dc 62%,#7f98a2 68%,#b8c6ca 82%,#7a888d 100%)"></div>
<div style="position:absolute;left:658px;top:1032px;width:8px;height:8px;border-radius:50%;background:#262626;box-shadow:inset 0 1.5px 1px #050505, 0 1.2px 0 rgba(255,255,255,0.14)"></div>
<div style="position:absolute;left:658px;top:1048px;width:8px;height:8px;border-radius:50%;background:#262626;box-shadow:inset 0 1.5px 1px #050505, 0 1.2px 0 rgba(255,255,255,0.14)"></div>
<div style="position:absolute;left:672px;top:1032px;width:8px;height:8px;border-radius:50%;background:#262626;box-shadow:inset 0 1.5px 1px #050505, 0 1.2px 0 rgba(255,255,255,0.14)"></div>
<div style="position:absolute;left:672px;top:1048px;width:8px;height:8px;border-radius:50%;background:#262626;box-shadow:inset 0 1.5px 1px #050505, 0 1.2px 0 rgba(255,255,255,0.14)"></div>
<div style="position:absolute;left:686px;top:1032px;width:8px;height:8px;border-radius:50%;background:#262626;box-shadow:inset 0 1.5px 1px #050505, 0 1.2px 0 rgba(255,255,255,0.14)"></div>
<div style="position:absolute;left:686px;top:1048px;width:8px;height:8px;border-radius:50%;background:#262626;box-shadow:inset 0 1.5px 1px #050505, 0 1.2px 0 rgba(255,255,255,0.14)"></div>
<svg style="position:absolute;left:173px;top:1158px;" width="51" height="38" viewBox="0 0 51 38"><g transform="translate(6,0)" opacity="0.55"><rect x="0" y="0" width="44" height="31" fill="#0a0a0a"/><rect x="3" y="2.5" width="6" height="5" rx="1.5" fill="#4a4a4a"/><rect x="35" y="2.5" width="6" height="5" rx="1.5" fill="#4a5a66"/><rect x="3" y="10.5" width="6" height="5" rx="1.5" fill="#4a4a4a"/><rect x="35" y="10.5" width="6" height="5" rx="1.5" fill="#4a5a66"/><rect x="3" y="18.5" width="6" height="5" rx="1.5" fill="#4a4a4a"/><rect x="35" y="18.5" width="6" height="5" rx="1.5" fill="#4a5a66"/><rect x="3" y="26.5" width="6" height="5" rx="1.5" fill="#4a4a4a"/><rect x="35" y="26.5" width="6" height="5" rx="1.5" fill="#4a5a66"/><rect x="12" y="0" width="20" height="4" fill="#86a6c6"/><rect x="12" y="7.5" width="20" height="16" fill="#4f7190"/><rect x="12" y="7.5" width="20" height="5" fill="#6d8eab"/><rect x="12" y="27" width="20" height="4" fill="#1f3a4c"/></g><g transform="translate(0,6.2)" opacity="1.0"><rect x="0" y="0" width="44" height="31" fill="#0a0a0a"/><rect x="3" y="2.5" width="6" height="5" rx="1.5" fill="#4a4a4a"/><rect x="35" y="2.5" width="6" height="5" rx="1.5" fill="#4a5a66"/><rect x="3" y="10.5" width="6" height="5" rx="1.5" fill="#4a4a4a"/><rect x="35" y="10.5" width="6" height="5" rx="1.5" fill="#4a5a66"/><rect x="3" y="18.5" width="6" height="5" rx="1.5" fill="#4a4a4a"/><rect x="35" y="18.5" width="6" height="5" rx="1.5" fill="#4a5a66"/><rect x="3" y="26.5" width="6" height="5" rx="1.5" fill="#4a4a4a"/><rect x="35" y="26.5" width="6" height="5" rx="1.5" fill="#4a5a66"/><rect x="12" y="0" width="20" height="4" fill="#86a6c6"/><rect x="12" y="7.5" width="20" height="16" fill="#4f7190"/><rect x="12" y="7.5" width="20" height="5" fill="#6d8eab"/><rect x="12" y="27" width="20" height="4" fill="#1f3a4c"/></g></svg>
<svg style="position:absolute;left:172px;top:1229px;" width="51" height="36" viewBox="0 0 51 36"><defs><linearGradient id="tr" x1="0" y1="0" x2="1" y2="1"><stop offset="0" stop-color="#aaaaaa"/><stop offset="1" stop-color="#8a8a8a"/></linearGradient></defs><path d="M0 18 L11 9 H39 L50 18 Z" fill="#9c9c9c"/><path d="M5 18 L13 11.5 H37 L45 18 Z" fill="#474747"/><rect x="0" y="18" width="50" height="17" fill="url(#tr)"/><rect x="0" y="33.5" width="50" height="1.5" fill="#6a6a6a"/><path d="M50.5 2 Q40 0 33 8 L30 14.5 H19.5 Q20.5 9 25 0 L27 6 Q37 -1 50.5 2 Z" fill="#c6c6c6"/></svg>
<svg style="position:absolute;left:172px;top:1308px;" width="51" height="27" viewBox="0 0 51 27"><defs><linearGradient id="tr2" x1="0" y1="0" x2="1" y2="1"><stop offset="0" stop-color="#aaaaaa"/><stop offset="1" stop-color="#8a8a8a"/></linearGradient></defs><path d="M0 9.5 L11 0.3 H39 L50 9.5 Z" fill="#9c9c9c"/><path d="M5 9.5 L13 2.3 H37 L45 9.5 Z" fill="#474747"/><rect x="0" y="9.3" width="50" height="16.7" fill="url(#tr2)"/><rect x="0" y="24.5" width="50" height="1.5" fill="#6a6a6a"/></svg>
<svg style="position:absolute;left:172px;top:1446px;" width="51" height="38" viewBox="0 0 51 38"><rect x="9.5" y="0" width="40.5" height="30" rx="4" fill="#7c7c7c"/><rect x="4.8" y="3.8" width="40.5" height="30" rx="4" fill="#8e8e8e"/><rect x="0" y="8" width="42" height="30" rx="4" fill="#a8a8a8" stroke="#8a8a8a" stroke-width="1"/><rect x="4" y="12" width="5.5" height="22" fill="#5c5c5c"/><rect x="32.5" y="12" width="5.5" height="22" fill="#5c5c5c"/><rect x="9.5" y="15" width="23" height="16" fill="#969696" stroke="#5c5c5c" stroke-width="1.8"/><circle cx="6.75" cy="16" r="1.3" fill="#a8a8a8"/><circle cx="6.75" cy="23" r="1.3" fill="#a8a8a8"/><circle cx="6.75" cy="30" r="1.3" fill="#a8a8a8"/><circle cx="35.25" cy="16" r="1.3" fill="#a8a8a8"/><circle cx="35.25" cy="23" r="1.3" fill="#a8a8a8"/><circle cx="35.25" cy="30" r="1.3" fill="#a8a8a8"/></svg>
<div style="position:absolute;left:632px;top:1162px;width:46px;height:30px;border-radius:15px;background:#d8d8d8;color:#1e1e1e;font-family:'Liberation Sans',sans-serif;font-size:22px;line-height:30px;text-align:center">7</div>
<div style="position:absolute;left:632px;top:1232px;width:46px;height:30px;border-radius:15px;background:#d8d8d8;color:#1e1e1e;font-family:'Liberation Sans',sans-serif;font-size:22px;line-height:30px;text-align:center">6</div>
<div style="position:absolute;left:632px;top:1302px;width:46px;height:30px;border-radius:15px;background:#d8d8d8;color:#1e1e1e;font-family:'Liberation Sans',sans-serif;font-size:22px;line-height:30px;text-align:center">1</div>
<div style="position:absolute;left:632px;top:1452px;width:46px;height:30px;border-radius:15px;background:#d8d8d8;color:#1e1e1e;font-family:'Liberation Sans',sans-serif;font-size:22px;line-height:30px;text-align:center">2</div>
<svg style="position:absolute;left:650px;top:234px;" width="40.5" height="40.5" viewBox="0 0 40.5 40.5"><g transform="scale(0.84375)"><path d="M12 36 L36 12" stroke="#e2e2e2" stroke-width="8.5"/><circle cx="37" cy="11" r="11" fill="#e2e2e2"/><circle cx="11" cy="37" r="11" fill="#e2e2e2"/><path d="M39.8 13.8 L34.2 8.2 L44.8 -2.4 L50.4 3.2 Z" fill="#434343"/><path d="M8.2 34.2 L13.8 39.8 L3.2 50.4 L-2.4 44.8 Z" fill="#434343"/></g></svg>
<svg style="position:absolute;left:1573px;top:235px;" width="38" height="40" viewBox="0 0 38 40"><circle cx="15.8" cy="16" r="13" stroke="#e2e2e2" stroke-width="2.9" fill="none"/><path d="M24.5 25.5 L32.5 33.5" stroke="#e2e2e2" stroke-width="5.5" stroke-linecap="round"/></svg>
<svg style="position:absolute;left:1650px;top:232px;" width="42" height="42" viewBox="0 0 42 42"><rect x="0" y="0" width="10" height="10" fill="#e2e2e2"/><rect x="0" y="16" width="10" height="10" fill="#e2e2e2"/><rect x="0" y="32" width="10" height="10" fill="#e2e2e2"/><rect x="16" y="2" width="26" height="6" fill="#e2e2e2"/><rect x="16" y="18" width="26" height="6" fill="#e2e2e2"/><rect x="16" y="34" width="26" height="6" fill="#e2e2e2"/></svg>
<svg style="position:absolute;left:166px;top:1720px;" width="43" height="40" viewBox="0 0 43 40"><path d="M0 40 V2.5 Q0 0 2.5 0 H39.7 Q42.2 0 42.2 2.5 V40 H37.9 V36 H4.3 V40 Z M4.3 4.5 V16 H37.9 V4.5 Z M4.3 20 V32 H37.9 V20 Z" fill="#e0e0e0" fill-rule="evenodd"/><rect x="7" y="8" width="3.6" height="8.5" rx="1" fill="#e0e0e0"/><rect x="7" y="24" width="3.6" height="8.5" rx="1" fill="#e0e0e0"/><rect x="13.1" y="8" width="3.6" height="8.5" rx="1" fill="#e0e0e0"/><rect x="13.1" y="24" width="3.6" height="8.5" rx="1" fill="#e0e0e0"/><rect x="19.2" y="8" width="3.6" height="8.5" rx="1" fill="#e0e0e0"/><rect x="19.2" y="24" width="3.6" height="8.5" rx="1" fill="#e0e0e0"/><rect x="25.2" y="8" width="3.6" height="8.5" rx="1" fill="#e0e0e0"/><rect x="25.2" y="24" width="3.6" height="8.5" rx="1" fill="#e0e0e0"/><rect x="31.3" y="8" width="3.6" height="8.5" rx="1" fill="#e0e0e0"/><rect x="31.3" y="24" width="3.6" height="8.5" rx="1" fill="#e0e0e0"/></svg>
<svg style="position:absolute;left:228px;top:1740px;" width="14" height="11" viewBox="0 0 14 11"><path d="M0 0 H14 L7 11 Z" fill="#d4d4d4"/></svg>
<svg style="position:absolute;left:308px;top:1725px;" width="52" height="28" viewBox="0 0 52 28"><path d="M0 10.5 L12.5 0.8 H39.8 L52 10.5 Z M4.6 10.7 L14.5 3.1 H37.7 L47.6 10.7 Z" fill="#e0e0e0" fill-rule="evenodd"/><rect x="0" y="10.5" width="52" height="16.6" fill="#e0e0e0"/></svg>
<svg style="position:absolute;left:374px;top:1740px;" width="14" height="11" viewBox="0 0 14 11"><path d="M0 0 H14 L7 11 Z" fill="#d4d4d4"/></svg>
<svg style="position:absolute;left:462px;top:1720px;" width="41" height="40" viewBox="0 0 41 40"><rect x="0" y="20.2" width="20" height="19.8" fill="#e0e0e0"/><path d="M10 10.1 H30 V30 H24 V16 H10 Z" fill="#e0e0e0"/><path d="M19.8 0 H40 V20.1 H34.1 V5.8 H19.8 Z" fill="#e0e0e0"/></svg>
<svg style="position:absolute;left:522px;top:1740px;" width="14" height="11" viewBox="0 0 14 11"><path d="M0 0 H14 L7 11 Z" fill="#d4d4d4"/></svg>
<svg style="position:absolute;left:768px;top:1718px;" width="43" height="43" viewBox="0 0 43 43"><rect x="0" y="1.8" width="14.4" height="14.4" fill="#e0e0e0"/><rect x="26" y="2" width="14.5" height="14.5" fill="none" stroke="#e0e0e0" stroke-width="4"/><rect x="0" y="27.8" width="14.4" height="14.4" fill="#e0e0e0"/><rect x="26.2" y="27.8" width="14.4" height="14.4" fill="#e0e0e0"/></svg>
<svg style="position:absolute;left:941px;top:1719px;" width="43" height="44" viewBox="0 0 43 44"><path d="M1 14.4 L7.3 3.2 Q8.5 1 11 1 H24 Q26.5 1 27.6 3.2 L33 14.4 Z" fill="#e0e0e0"/><path d="M1 16.9 H33 V21 Q33 25 29 25 H5 Q1 25 1 21 Z" fill="#e0e0e0"/><circle cx="27.6" cy="21" r="2.2" fill="#444"/><path d="M17 27 Q23 31.5 30.8 31.6 V26.9 L41.1 35.5 L30.8 42.8 V38.4 Q21 38 17 27 Z" fill="#e0e0e0"/></svg>
<svg style="position:absolute;left:1468px;top:1724px;" width="44" height="33" viewBox="0 0 44 33"><rect x="0" y="0" width="12" height="32.5" fill="#e0e0e0"/><rect x="32" y="0" width="12" height="32.5" fill="#e0e0e0"/><rect x="12" y="3.8" width="20" height="4.2" fill="#e0e0e0"/><rect x="12" y="23.8" width="20" height="4.4" fill="#e0e0e0"/><ellipse cx="6" cy="8" rx="3" ry="2.4" fill="#444"/><ellipse cx="38" cy="8" rx="3" ry="2.4" fill="#444"/><ellipse cx="6" cy="16.3" rx="3" ry="2.4" fill="#444"/><ellipse cx="38" cy="16.3" rx="3" ry="2.4" fill="#444"/><ellipse cx="6" cy="24.4" rx="3" ry="2.4" fill="#444"/><ellipse cx="38" cy="24.4" rx="3" ry="2.4" fill="#444"/><ellipse cx="6" cy="0" rx="3" ry="2.2" fill="#444"/><ellipse cx="38" cy="0" rx="3" ry="2.2" fill="#444"/><ellipse cx="6" cy="32.5" rx="3" ry="2.2" fill="#444"/><ellipse cx="38" cy="32.5" rx="3" ry="2.2" fill="#444"/></svg>
<svg style="position:absolute;left:1530px;top:1740px;" width="14" height="11" viewBox="0 0 14 11"><path d="M0 0 H14 L7 11 Z" fill="#d4d4d4"/></svg>
<svg style="position:absolute;left:1611px;top:1716px;" width="47" height="47" viewBox="0 0 47 47"><g transform="scale(0.9791666666666666)"><path d="M12 36 L36 12" stroke="#e2e2e2" stroke-width="8.5"/><circle cx="37" cy="11" r="11" fill="#e2e2e2"/><circle cx="11" cy="37" r="11" fill="#e2e2e2"/><path d="M39.8 13.8 L34.2 8.2 L44.8 -2.4 L50.4 3.2 Z" fill="#444444"/><path d="M8.2 34.2 L13.8 39.8 L3.2 50.4 L-2.4 44.8 Z" fill="#444444"/></g></svg>
<svg style="position:absolute;left:1676px;top:1740px;" width="14" height="11" viewBox="0 0 14 11"><path d="M0 0 H14 L7 11 Z" fill="#d4d4d4"/></svg>
<div style="position:absolute;left:1736px;top:814px;width:752px;height:21px;border-radius:11px;background:#353535;border-top:1.5px solid #1f1f1f;border-bottom:1.5px solid #585858;box-sizing:border-box"></div>
<div style="position:absolute;left:1744px;top:889px;width:202px;height:7px;border-radius:4px;background:#2a2a2a"></div>
<svg style="position:absolute;left:1814px;top:880px;" width="58" height="26" viewBox="0 0 58 26"><path d="M1 12.5 L16 0 V25 Z" fill="#4c4c4c" stroke="#3a3a3a" stroke-width="1"/><path d="M16 12.5 L29 0 L42 12.5 L29 25 Z" fill="#4e4e4e" stroke="#3a3a3a" stroke-width="1"/><path d="M29 0 V25" stroke="#3a3a3a" stroke-width="1"/><path d="M57 12.5 L42 0 V25 Z" fill="#4c4c4c" stroke="#3a3a3a" stroke-width="1"/></svg>
<svg style="position:absolute;left:2082px;top:876px;" width="61" height="41" viewBox="0 0 61 41"><defs><linearGradient id="pl" x1="0" y1="0" x2="0" y2="1"><stop offset="0" stop-color="#616161"/><stop offset="1" stop-color="#4b4b4b"/></linearGradient></defs><path d="M0 0 L60 20 L0 40 Z" fill="url(#pl)"/></svg>
<svg style="position:absolute;left:2378px;top:876px;" width="21" height="42" viewBox="0 0 21 42"><defs><linearGradient id="mi" x1="0" y1="0" x2="0" y2="1"><stop offset="0" stop-color="#5c5c5c"/><stop offset="1" stop-color="#474747"/></linearGradient></defs><path d="M14 0 H20 V42 L0.4 20.8 H14 Z" fill="url(#mi)"/></svg>
<svg style="position:absolute;left:2463px;top:876px;" width="21" height="42" viewBox="0 0 21 42"><defs><linearGradient id="mo" x1="0" y1="0" x2="0" y2="1"><stop offset="0" stop-color="#5c5c5c"/><stop offset="1" stop-color="#474747"/></linearGradient></defs><path d="M1 0 H7 V20.8 H20.4 L1 42 Z" fill="url(#mo)"/></svg>
<div style="position:absolute;left:2012px;top:950px;width:200px;height:41px;border-radius:21px;background:#2b2b2b;border-top:1.5px solid #1c1c1c;border-bottom:1.5px solid #626262;box-sizing:border-box"></div>
<svg style="position:absolute;left:2450px;top:1560px;" width="37" height="38" viewBox="0 0 37 38"><ellipse cx="18.5" cy="19" rx="18" ry="19" fill="#7a7a7a"/><g transform="translate(18.5,19) scale(0.8) translate(-24,-24)"><circle cx="27" cy="12.9" r="3.2" fill="#262626"/><path d="M16 22.7 Q19 19.5 22 19.3 H27.8 L22.2 32.5 Q21.8 33.6 22.8 33.2 L28.6 29.4 L29 30 Q23 36 19.5 36 Q16 36 17 32.5 L21.2 21.5 Q19 21.5 16.5 23.2 Z" fill="#262626"/></g></svg>
<svg style="position:absolute;left:1732px;top:314px;" width="18" height="10" viewBox="0 0 18 10"><path d="M0 0 H18 L9 10 Z" fill="#dcdcdc"/></svg>
<div style="position:absolute;left:1712px;top:350px;width:2px;height:448px;background:#1b1b1b;"></div>
<div style="position:absolute;left:1712px;top:222px;width:2px;height:64px;background:#4e4e4e;"></div>
<div style="position:absolute;left:1712px;top:288px;width:2px;height:60px;background:#606060;"></div>
<div style="position:absolute;left:1712px;top:798px;width:2px;height:50px;background:#565656;"></div>
<div style="position:absolute;left:1712px;top:850px;width:2px;height:88px;background:#3c3c3c;"></div>
<div style="position:absolute;left:1712px;top:940px;width:2px;height:60px;background:#5e5e5e;"></div>
<div style="position:absolute;left:1712px;top:1002px;width:2px;height:54px;background:#444444;"></div>
<div style="position:absolute;left:1712px;top:1612px;width:2px;height:54px;background:#454545;"></div>
<div style="position:absolute;left:112px;top:120px;width:1px;height:1684px;background:rgba(255,255,255,0.10);"></div>
<div style="position:absolute;left:2511px;top:120px;width:1px;height:1684px;background:rgba(255,255,255,0.10);"></div>
<div class="t" style="left:1155.90px;top:84px;font-size:26px;color:#4b4b4b;letter-spacing:0px;transform:scaleX(1.0476);">Library - Catalyst Prepare</div>
<div style="position:absolute;left:128px;top:136px;width:383px;height:68px;border-radius:10px;background:#2f2f2f;border:2px solid #262626;box-sizing:border-box;box-shadow:0 1px 0 rgba(255,255,255,0.07);overflow:hidden"><div style="position:absolute;left:190px;top:0;width:191px;height:64px;background:linear-gradient(#7b7b7b,#6a6a6a)"></div></div>
<div class="t" style="left:169.98px;top:156px;font-size:26px;color:#f0f0f0;letter-spacing:0px;transform:scaleX(1.0192);">Organize</div>
<div class="t" style="left:391.95px;top:156px;font-size:26px;color:#f0f0f0;letter-spacing:0px;transform:scaleX(1.0233);">Edit</div>
<div style="position:absolute;left:796px;top:128px;width:1036px;height:83px;border-radius:10px;background:#333333;border:1.5px solid #2a2a2a;box-sizing:border-box;box-shadow:0 1px 2px rgba(0,0,0,0.4), inset 0 2px 2px rgba(0,0,0,0.25);overflow:hidden"><div style="position:absolute;left:0;bottom:0.5px;width:100%;height:4.5px;background:#4caa4c"></div></div>
<div style="position:absolute;left:824px;top:164px;width:12px;height:12px;border-radius:50%;background:#ececec"></div>
<div style="position:absolute;left:844px;top:164px;width:12px;height:12px;border-radius:50%;background:#ececec"></div>
<div style="position:absolute;left:864px;top:164px;width:12px;height:12px;border-radius:50%;background:#ececec"></div>
<svg style="position:absolute;left:928px;top:156px;" width="40" height="32" viewBox="0 0 40 32"><path d="M5.5 16.5 L14.5 25.5 L34.5 5.5" stroke="#ececec" stroke-width="6" fill="none" stroke-linecap="butt" stroke-linejoin="miter"/></svg>
<div class="t" style="left:1160.01px;top:157px;font-size:25px;color:#e6e6e6;letter-spacing:0px;transform:scaleX(0.9903);">Connected to remote server</div>
<div style="position:absolute;left:1663px;top:152px;width:36px;height:36px;border-radius:50%;background:#d2d2d2"></div>
<svg style="position:absolute;left:1663px;top:152px;" width="36" height="36" viewBox="0 0 36 36"><path d="M11 11 L25 25 M25 11 L11 25" stroke="#2e2e2e" stroke-width="5"/></svg>
<div style="position:absolute;left:1942px;top:136px;width:96px;height:68px;border-radius:10px;background:#333333;box-shadow:0 1px 1px rgba(0,0,0,0.3)"></div>
<svg style="position:absolute;left:1966px;top:148px;" width="48" height="48" viewBox="0 0 48 48"><circle cx="24" cy="24" r="22" stroke="#ececec" stroke-width="4" fill="none"/><circle cx="27" cy="12.9" r="3.2" fill="#f4f4f4"/><path d="M16 22.7 Q19 19.5 22 19.3 H27.8 L22.2 32.5 Q21.8 33.6 22.8 33.2 L28.6 29.4 L29 30 Q23 36 19.5 36 Q16 36 17 32.5 L21.2 21.5 Q19 21.5 16.5 23.2 Z" fill="#f4f4f4"/></svg>
<svg style="position:absolute;left:2066px;top:152px;" width="48" height="38" viewBox="0 0 48 38"><path d="M12 0 H48 V26 H36 V20 H42 V6 H18 V12 H12 Z" fill="#e2e2e2"/><rect x="0" y="12" width="36" height="26" fill="#e2e2e2"/></svg>
<svg style="position:absolute;left:2166px;top:152px;" width="48" height="38" viewBox="0 0 48 38"><path d="M0 22 H8 V30 H40 V22 H48 V38 H0 Z" fill="#e2e2e2"/><path d="M24 0 L35.5 12.3 H30 V22 H18 V12.3 H12.5 Z" fill="#e2e2e2"/></svg>
<svg style="position:absolute;left:2264px;top:150px;" width="54" height="41" viewBox="0 0 54 41"><path d="M24.3 10 H7 Q2 10 2 15 V33 Q2 38 7 38 H41.2 Q46.2 38 46.2 33 V20.6" stroke="#e2e2e2" stroke-width="4" fill="none"/><path d="M13.5 25 Q20 8 36 7.2 V0 L52.2 12 L36 26 V18.4 Q22 16.5 13.5 25 Z" fill="#e2e2e2" stroke="#5b5b5b" stroke-width="3" paint-order="stroke"/></svg>
<div style="position:absolute;left:2356px;top:134px;width:1px;height:76px;background:#3a3a3a;"></div>
<div style="position:absolute;left:2357px;top:134px;width:1px;height:76px;background:#686868;"></div>
<svg style="position:absolute;left:2397px;top:150px;" width="50" height="40" viewBox="0 0 50 40"><path d="M16 8 V3.7 Q16 1.7 18 1.7 H32 Q34 1.7 34 3.7 V8 H31 V5.3 H19 V8 Z" fill="#f0f0f0"/><rect x="0.7" y="7.6" width="48.2" height="30.1" rx="8" fill="#f0f0f0"/><rect x="0.7" y="16.8" width="48.2" height="3.4" fill="#5a5a5a"/><rect x="13" y="16" width="6" height="6" rx="2.5" fill="#5a5a5a"/><rect x="31" y="16" width="6.2" height="6" rx="2.5" fill="#5a5a5a"/></svg>
<svg style="position:absolute;left:2461px;top:169px;" width="15" height="11" viewBox="0 0 15 11"><path d="M0 0 H15 L7.5 11 Z" fill="#d6d6d6"/></svg>
<div class="t" style="left:143.08px;top:240px;font-size:26px;color:#f2f2f2;letter-spacing:0px;transform:scaleX(0.9605);">Places</div>
<div class="t" style="left:745.01px;top:240px;font-size:26px;color:#5cb8ee;letter-spacing:0px;transform:scaleX(0.9944);">XDCAM Station</div>
<svg style="position:absolute;left:949px;top:246px;" width="14" height="20" viewBox="0 0 14 20"><path d="M2 1.5 L11 10 L2 18.5" stroke="#b8b8b8" stroke-width="3" fill="none"/></svg>
<div class="t" style="left:985.20px;top:240px;font-size:26px;color:#f2f2f2;letter-spacing:0px;transform:scaleX(0.8983);">DISC</div>
<div class="t" style="left:1744.91px;top:240px;font-size:26px;color:#f2f2f2;letter-spacing:0px;transform:scaleX(1.0467);">Metadata</div>
<div class="t" style="left:175.21px;top:312px;font-size:25px;color:#f2f2f2;letter-spacing:2.5px;transform:scaleX(0.8938);">RECENT</div>
<div class="t" style="left:175.15px;top:397px;font-size:25px;color:#f2f2f2;letter-spacing:2.5px;transform:scaleX(0.9270);">FAVORITE</div>
<div class="t" style="left:246.82px;top:463px;font-size:25px;color:#c9c9c9;letter-spacing:0px;transform:scaleX(1.0899);">Desktop</div>
<div class="t" style="left:246.82px;top:527px;font-size:25px;color:#c9c9c9;letter-spacing:0px;transform:scaleX(1.0887);">Documents</div>
<div class="t" style="left:246.84px;top:591px;font-size:25px;color:#c9c9c9;letter-spacing:0px;transform:scaleX(1.0779);">Movies</div>
<div class="t" style="left:175.21px;top:676px;font-size:25px;color:#f2f2f2;letter-spacing:2.5px;transform:scaleX(0.8934);">DEVICES</div>
<div class="t" style="left:248.00px;top:741px;font-size:25px;color:#c9c9c9;letter-spacing:0px;transform:scaleX(1.0000);">macOS</div>
<div class="t" style="left:246.96px;top:805px;font-size:25px;color:#c9c9c9;letter-spacing:0px;transform:scaleX(1.0185);">PSGJointDevBuilds</div>
<div class="t" style="left:175.18px;top:889px;font-size:25px;color:#f2f2f2;letter-spacing:2.5px;transform:scaleX(0.9091);">REMOTE DEVICES</div>
<div class="t" style="left:246.97px;top:955px;font-size:25px;color:#c9c9c9;letter-spacing:0px;transform:scaleX(1.0347);">XDCAM Station</div>
<div class="t" style="left:143.95px;top:1030px;font-size:25px;color:#e4e4e4;letter-spacing:0px;transform:scaleX(1.0547);">Current Library: Library</div>
<div class="t" style="left:174.06px;top:1102px;font-size:25px;color:#f2f2f2;letter-spacing:2.5px;transform:scaleX(0.9683);">BINS</div>
<div class="t" style="left:248.00px;top:1165px;font-size:25px;color:#c9c9c9;letter-spacing:0px;transform:scaleX(1.0333);">All Clips</div>
<div class="t" style="left:248.00px;top:1235px;font-size:25px;color:#c9c9c9;letter-spacing:0px;transform:scaleX(1.1067);">Automatically Added</div>
<div class="t" style="left:245.85px;top:1304px;font-size:25px;color:#c9c9c9;letter-spacing:0px;transform:scaleX(1.0746);">Media</div>
<div class="t" style="left:175.07px;top:1388px;font-size:25px;color:#f2f2f2;letter-spacing:2.5px;transform:scaleX(0.9299);">STORYBOARDS</div>
<div class="t" style="left:246.94px;top:1455px;font-size:25px;color:#c9c9c9;letter-spacing:0px;transform:scaleX(1.0594);">Sample_Storyboard</div>
<div class="t" style="left:148.03px;top:1766px;font-size:25px;color:#e4e4e4;letter-spacing:0px;transform:scaleX(0.9867);">Library</div>
<div class="t" style="left:313.94px;top:1766px;font-size:25px;color:#e4e4e4;letter-spacing:0px;transform:scaleX(1.0303);">Bin</div>
<div class="t" style="left:421.01px;top:1766px;font-size:25px;color:#e4e4e4;letter-spacing:0px;transform:scaleX(0.9917);">Storyboard</div>
<div class="t" style="left:754.06px;top:1766px;font-size:25px;color:#e4e4e4;letter-spacing:0px;transform:scaleX(0.9420);">Select</div>
<div class="t" style="left:873.11px;top:1766px;font-size:25px;color:#e4e4e4;letter-spacing:0px;transform:scaleX(0.9438);">Back Up Source</div>
<div class="t" style="left:1470.11px;top:1766px;font-size:25px;color:#e4e4e4;letter-spacing:0px;transform:scaleX(0.9474);">File</div>
<div class="t" style="left:1608.00px;top:1766px;font-size:25px;color:#e4e4e4;letter-spacing:0px;transform:scaleX(0.9655);">Tools</div>
<div class="t" style="left:1768.98px;top:304px;font-size:26px;color:#f0f0f0;letter-spacing:0px;transform:scaleX(1.0110);">Preview</div>
<div class="t" style="left:2325.89px;top:305px;font-size:25px;color:#8a8a8a;letter-spacing:0px;transform:scaleX(1.1069);">00:00:00:00</div>
<div class="t" style="left:1818.82px;top:679px;font-size:25px;color:#a3a3a3;letter-spacing:0px;transform:scaleX(1.0880);">Playback of clips in this volume is not supported.</div>
<div class="t" style="left:1844.93px;top:957px;font-size:25px;color:#ececec;letter-spacing:0px;transform:scaleX(1.0660);">Summary</div>
<div class="t" style="left:2091.05px;top:957px;font-size:25px;color:#ececec;letter-spacing:0px;transform:scaleX(0.9737);">File</div>
<div class="t" style="left:2250.88px;top:957px;font-size:25px;color:#ececec;letter-spacing:0px;transform:scaleX(1.0615);">Mark Points</div>
<div class="t" style="left:2068.02px;top:1018px;font-size:25px;color:#dcdcdc;letter-spacing:2px;transform:scaleX(0.9882);">MEDIA</div>
<div class="t" style="left:2070.00px;top:1627px;font-size:25px;color:#dcdcdc;letter-spacing:2px;transform:scaleX(0.9882);">VIDEO</div>
<div class="t" style="left:1790.87px;top:1073px;font-size:25px;color:#b2b2b2;letter-spacing:0px;transform:scaleX(1.0654);">File name</div>
<div class="t" style="left:2298.03px;top:1070px;font-size:26px;color:#ececec;letter-spacing:0px;transform:scaleX(0.9708);">C0002.MXF</div>
<div style="position:absolute;left:1792px;top:1114px;width:640px;height:2px;background:#323232;"></div>
<div class="t" style="left:1790.88px;top:1135px;font-size:25px;color:#b2b2b2;letter-spacing:0px;transform:scaleX(1.0580);">Folder</div>
<div class="t" style="left:2043.00px;top:1132px;font-size:26px;color:#ececec;letter-spacing:0px;transform:scaleX(1.0571);">ftp://admin@43.148.81.16/DISC</div>
<div style="position:absolute;left:1792px;top:1176px;width:640px;height:2px;background:#323232;"></div>
<div class="t" style="left:1790.84px;top:1197px;font-size:25px;color:#b2b2b2;letter-spacing:0px;transform:scaleX(1.0779);">Format</div>
<div class="t" style="left:2203.99px;top:1194px;font-size:26px;color:#ececec;letter-spacing:0px;transform:scaleX(1.0089);">XDCAM HD/HD422</div>
<div style="position:absolute;left:1792px;top:1238px;width:640px;height:2px;background:#323232;"></div>
<div class="t" style="left:1790.84px;top:1259px;font-size:25px;color:#b2b2b2;letter-spacing:0px;transform:scaleX(1.0786);">Date created</div>
<div class="t" style="left:2082.00px;top:1256px;font-size:26px;color:#ececec;letter-spacing:0px;transform:scaleX(1.0324);">Wed Apr  2 11:38:02 2008 (Z)</div>
<div style="position:absolute;left:1792px;top:1300px;width:640px;height:2px;background:#323232;"></div>
<div class="t" style="left:1790.77px;top:1321px;font-size:25px;color:#b2b2b2;letter-spacing:0px;transform:scaleX(1.1126);">Date modified</div>
<div class="t" style="left:2030.94px;top:1318px;font-size:26px;color:#ececec;letter-spacing:0px;transform:scaleX(1.0310);">Fri Aug  1 14:17:52 2014 (+09:00)</div>
<div style="position:absolute;left:1792px;top:1362px;width:640px;height:2px;background:#323232;"></div>
<div class="t" style="left:1791.90px;top:1383px;font-size:25px;color:#b2b2b2;letter-spacing:0px;transform:scaleX(1.0952);">Start time</div>
<div class="t" style="left:2272.84px;top:1380px;font-size:26px;color:#ececec;letter-spacing:0px;transform:scaleX(1.1618);">01:01:08:25</div>
<div style="position:absolute;left:1792px;top:1424px;width:640px;height:2px;background:#323232;"></div>
<div class="t" style="left:1790.81px;top:1445px;font-size:25px;color:#b2b2b2;letter-spacing:0px;transform:scaleX(1.0938);">End time</div>
<div class="t" style="left:2274.85px;top:1442px;font-size:26px;color:#ececec;letter-spacing:0px;transform:scaleX(1.1471);">01:01:37:18</div>
<div style="position:absolute;left:1792px;top:1486px;width:640px;height:2px;background:#323232;"></div>
<div class="t" style="left:1790.75px;top:1507px;font-size:25px;color:#b2b2b2;letter-spacing:0px;transform:scaleX(1.1233);">Length</div>
<div class="t" style="left:2272.84px;top:1504px;font-size:26px;color:#ececec;letter-spacing:0px;transform:scaleX(1.1618);">00:00:28:23</div>
<div style="position:absolute;left:1792px;top:1548px;width:640px;height:2px;background:#323232;"></div>
<div class="t" style="left:1790.90px;top:1569px;font-size:25px;color:#b2b2b2;letter-spacing:0px;transform:scaleX(1.0492);">UMID</div>
<div class="t" style="left:1790.93px;top:1683px;font-size:25px;color:#b2b2b2;letter-spacing:0px;transform:scaleX(1.0331);">Frame size</div>
<div class="t" style="left:2283.93px;top:1680px;font-size:26px;color:#ececec;letter-spacing:0px;transform:scaleX(1.0355);">1920 x 1080</div>
<div style="position:absolute;left:1792px;top:1724px;width:640px;height:2px;background:#323232;"></div>
<div class="t" style="left:1790.90px;top:1745px;font-size:25px;color:#b2b2b2;letter-spacing:0px;transform:scaleX(1.0500);">Frame rate</div>
<div class="t" style="left:2321.97px;top:1742px;font-size:26px;color:#ececec;letter-spacing:0px;transform:scaleX(1.0283);">29.97 fps</div>
<div style="position:absolute;left:1792px;top:1786px;width:640px;height:2px;background:#323232;"></div>
<div class="t" style="left:900.00px;top:569px;font-size:25px;color:#d4d4d4;letter-spacing:0px;transform:scaleX(1.0000);">C0001.MXF</div>
<div class="t" style="left:1398.00px;top:569px;font-size:25px;color:#ffffff;letter-spacing:0px;transform:scaleX(1.0000);">C0002.MXF</div>
<div class="t" style="left:900.00px;top:909px;font-size:25px;color:#d4d4d4;letter-spacing:0px;transform:scaleX(1.0000);">C0003.MXF</div>
<div class="t" style="left:1398.00px;top:909px;font-size:25px;color:#d4d4d4;letter-spacing:0px;transform:scaleX(1.0000);">C0004.MXF</div>
<div class="t" style="left:900.00px;top:1249px;font-size:25px;color:#d4d4d4;letter-spacing:0px;transform:scaleX(1.0000);">C0005.MXF</div>
<div class="t" style="left:1398.00px;top:1249px;font-size:25px;color:#d4d4d4;letter-spacing:0px;transform:scaleX(1.0000);">C0006.MXF</div>
<div class="t" style="left:900.00px;top:1589px;font-size:25px;color:#d4d4d4;letter-spacing:0px;transform:scaleX(1.0000);">C0007.MXF</div>
<div class="t" style="left:1398.00px;top:1589px;font-size:25px;color:#d4d4d4;letter-spacing:0px;transform:scaleX(1.0000);">C0008.MXF</div>
<div class="t" style="left:1914.98px;top:1567px;font-size:26px;color:#ececec;letter-spacing:0px;transform:scaleX(1.0239);-webkit-mask-image:linear-gradient(90deg,rgba(0,0,0,0.05) 0%,rgba(0,0,0,0.6) 6%,#000 12%);mask-image:linear-gradient(90deg,rgba(0,0,0,0.05) 0%,rgba(0,0,0,0.6) 6%,#000 12%)">0009281110058450580080046020125F7F6</div>
</div>
</body></html>
